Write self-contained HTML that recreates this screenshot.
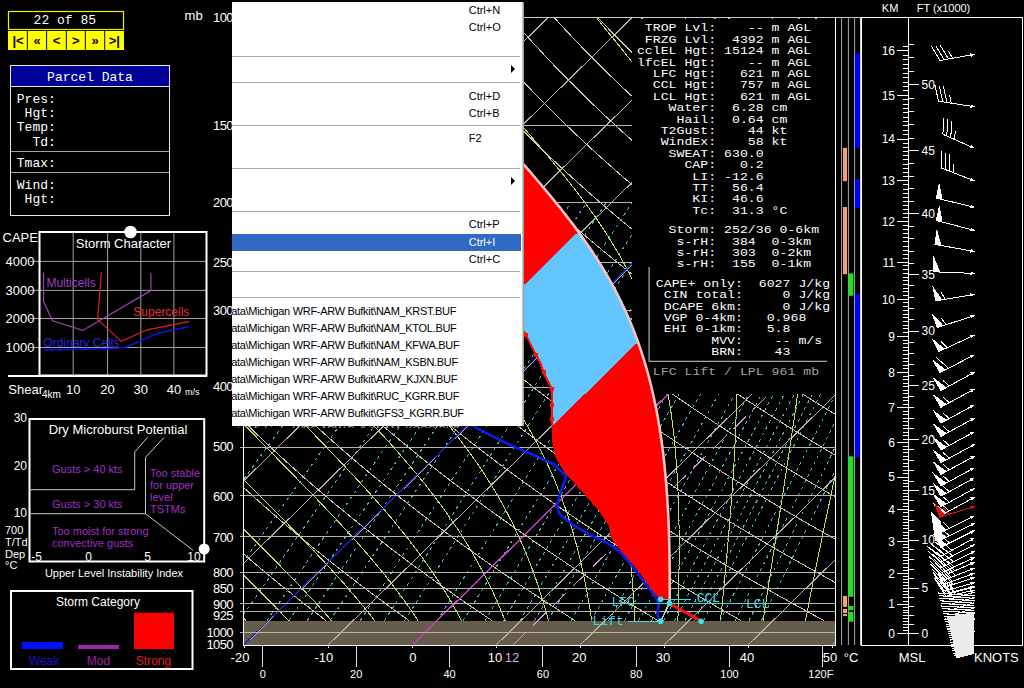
<!DOCTYPE html>
<html><head><meta charset="utf-8"><style>
html,body{margin:0;padding:0;background:#000;width:1024px;height:688px;overflow:hidden;}
body{position:relative;font-family:"Liberation Sans",sans-serif;color:#fff;}
.a{position:absolute;white-space:pre;}
.mono{font-family:"Liberation Mono",monospace;}
svg{position:absolute;left:0;top:0;}
</style></head><body>

<svg width="1024" height="688" viewBox="0 0 1024 688" shape-rendering="crispEdges">
<defs><clipPath id="plot"><rect x="243.6" y="17.5" width="592.1" height="627.5"/></clipPath></defs>
<rect x="243.6" y="620.7" width="592.1" height="24.3" fill="#665c4a"/>
<g clip-path="url(#plot)">
<path d="M-595.8,645.0 44.2,17.5 M-511.8,645.0 128.2,17.5 M-427.8,645.0 212.2,17.5 M-343.8,645.0 296.2,17.5 M-259.8,645.0 380.2,17.5 M-175.8,645.0 464.2,17.5 M-91.8,645.0 548.2,17.5 M-7.8,645.0 632.2,17.5 M76.2,645.0 716.2,17.5 M160.2,645.0 800.2,17.5 M244.2,645.0 884.2,17.5 M328.2,645.0 968.2,17.5 M412.2,645.0 1052.2,17.5 M496.2,645.0 1136.2,17.5 M580.2,645.0 1220.2,17.5 M664.2,645.0 1304.2,17.5 M748.2,645.0 1388.2,17.5 M832.2,645.0 1472.2,17.5" stroke="#b8b0a8" stroke-width="1" fill="none"/>
<path d="M-228.5,17.5 -227.9,25.5 -227.3,33.5 -226.6,41.5 -225.8,49.5 -224.9,57.5 -224.0,65.5 -222.9,73.5 -221.8,81.5 -220.6,89.5 -219.4,97.5 -218.0,105.5 -216.6,113.5 -215.1,121.5 -213.5,129.5 -211.8,137.5 -210.0,145.5 -208.2,153.5 -206.2,161.5 -204.2,169.5 -202.1,177.5 -199.9,185.5 -197.6,193.5 -195.2,201.5 -192.8,209.5 -190.2,217.5 -187.6,225.5 -184.8,233.5 -182.0,241.5 -179.0,249.5 -176.0,257.5 -172.9,265.5 -169.7,273.5 -166.3,281.5 -162.9,289.5 -159.4,297.5 -155.8,305.5 -152.0,313.5 -148.2,321.5 -144.3,329.5 -140.3,337.5 -136.1,345.5 -131.9,353.5 -127.5,361.5 -123.1,369.5 -118.5,377.5 -113.8,385.5 -109.0,393.5 -104.1,401.5 -99.1,409.5 -94.0,417.5 -88.8,425.5 -83.4,433.5 -78.0,441.5 -72.4,449.5 -66.7,457.5 -60.8,465.5 -54.9,473.5 -48.8,481.5 -42.6,489.5 -36.3,497.5 -29.9,505.5 -23.3,513.5 -16.6,521.5 -9.8,529.5 -2.9,537.5 4.2,545.5 11.4,553.5 18.8,561.5 26.2,569.5 33.8,577.5 41.6,585.5 49.5,593.5 57.5,601.5 65.6,609.5 73.9,617.5 77.3,620.7 M-185.0,17.5 -184.1,25.5 -183.1,33.5 -182.0,41.5 -180.8,49.5 -179.5,57.5 -178.2,65.5 -176.8,73.5 -175.3,81.5 -173.7,89.5 -172.0,97.5 -170.2,105.5 -168.4,113.5 -166.5,121.5 -164.5,129.5 -162.4,137.5 -160.2,145.5 -157.9,153.5 -155.5,161.5 -153.0,169.5 -150.5,177.5 -147.9,185.5 -145.1,193.5 -142.3,201.5 -139.4,209.5 -136.3,217.5 -133.2,225.5 -130.0,233.5 -126.7,241.5 -123.3,249.5 -119.8,257.5 -116.2,265.5 -112.5,273.5 -108.6,281.5 -104.7,289.5 -100.7,297.5 -96.6,305.5 -92.3,313.5 -88.0,321.5 -83.6,329.5 -79.0,337.5 -74.3,345.5 -69.6,353.5 -64.7,361.5 -59.7,369.5 -54.6,377.5 -49.3,385.5 -44.0,393.5 -38.5,401.5 -33.0,409.5 -27.3,417.5 -21.5,425.5 -15.5,433.5 -9.5,441.5 -3.3,449.5 3.0,457.5 9.4,465.5 16.0,473.5 22.7,481.5 29.5,489.5 36.4,497.5 43.5,505.5 50.7,513.5 58.0,521.5 65.4,529.5 73.0,537.5 80.8,545.5 88.6,553.5 96.6,561.5 104.8,569.5 113.1,577.5 121.5,585.5 130.1,593.5 138.8,601.5 147.6,609.5 156.6,617.5 160.3,620.7 M-141.5,17.5 -140.2,25.5 -138.8,33.5 -137.3,41.5 -135.8,49.5 -134.1,57.5 -132.4,65.5 -130.6,73.5 -128.7,81.5 -126.7,89.5 -124.6,97.5 -122.5,105.5 -120.2,113.5 -117.9,121.5 -115.4,129.5 -112.9,137.5 -110.3,145.5 -107.6,153.5 -104.8,161.5 -101.9,169.5 -98.9,177.5 -95.8,185.5 -92.6,193.5 -89.3,201.5 -85.9,209.5 -82.5,217.5 -78.9,225.5 -75.2,233.5 -71.4,241.5 -67.5,249.5 -63.5,257.5 -59.4,265.5 -55.2,273.5 -50.9,281.5 -46.5,289.5 -42.0,297.5 -37.4,305.5 -32.6,313.5 -27.8,321.5 -22.8,329.5 -17.7,337.5 -12.5,345.5 -7.2,353.5 -1.8,361.5 3.7,369.5 9.4,377.5 15.2,385.5 21.1,393.5 27.1,401.5 33.2,409.5 39.5,417.5 45.9,425.5 52.4,433.5 59.0,441.5 65.8,449.5 72.7,457.5 79.7,465.5 86.9,473.5 94.1,481.5 101.6,489.5 109.1,497.5 116.8,505.5 124.6,513.5 132.6,521.5 140.7,529.5 148.9,537.5 157.3,545.5 165.8,553.5 174.5,561.5 183.3,569.5 192.3,577.5 201.4,585.5 210.7,593.5 220.1,601.5 229.6,609.5 239.3,617.5 243.3,620.7 M-98.1,17.5 -96.4,25.5 -94.6,33.5 -92.7,41.5 -90.8,49.5 -88.8,57.5 -86.6,65.5 -84.4,73.5 -82.1,81.5 -79.7,89.5 -77.3,97.5 -74.7,105.5 -72.0,113.5 -69.3,121.5 -66.4,129.5 -63.5,137.5 -60.4,145.5 -57.3,153.5 -54.0,161.5 -50.7,169.5 -47.3,177.5 -43.7,185.5 -40.1,193.5 -36.4,201.5 -32.5,209.5 -28.6,217.5 -24.6,225.5 -20.4,233.5 -16.1,241.5 -11.8,249.5 -7.3,257.5 -2.7,265.5 2.0,273.5 6.8,281.5 11.7,289.5 16.7,297.5 21.8,305.5 27.1,313.5 32.4,321.5 37.9,329.5 43.5,337.5 49.2,345.5 55.1,353.5 61.0,361.5 67.1,369.5 73.3,377.5 79.7,385.5 86.1,393.5 92.7,401.5 99.4,409.5 106.2,417.5 113.2,425.5 120.3,433.5 127.5,441.5 134.9,449.5 142.3,457.5 150.0,465.5 157.7,473.5 165.6,481.5 173.7,489.5 181.8,497.5 190.2,505.5 198.6,513.5 207.2,521.5 216.0,529.5 224.8,537.5 233.9,545.5 243.1,553.5 252.4,561.5 261.9,569.5 271.5,577.5 281.3,585.5 291.3,593.5 301.4,601.5 311.6,609.5 322.0,617.5 326.2,620.7 M-54.6,17.5 -52.5,25.5 -50.4,33.5 -48.1,41.5 -45.8,49.5 -43.4,57.5 -40.9,65.5 -38.3,73.5 -35.6,81.5 -32.8,89.5 -29.9,97.5 -26.9,105.5 -23.8,113.5 -20.7,121.5 -17.4,129.5 -14.0,137.5 -10.5,145.5 -7.0,153.5 -3.3,161.5 0.5,169.5 4.3,177.5 8.3,185.5 12.4,193.5 16.6,201.5 20.9,209.5 25.3,217.5 29.8,225.5 34.4,233.5 39.1,241.5 44.0,249.5 48.9,257.5 54.0,265.5 59.2,273.5 64.4,281.5 69.9,289.5 75.4,297.5 81.0,305.5 86.8,313.5 92.7,321.5 98.7,329.5 104.8,337.5 111.0,345.5 117.4,353.5 123.9,361.5 130.5,369.5 137.3,377.5 144.2,385.5 151.2,393.5 158.3,401.5 165.6,409.5 173.0,417.5 180.5,425.5 188.2,433.5 196.0,441.5 203.9,449.5 212.0,457.5 220.2,465.5 228.6,473.5 237.1,481.5 245.8,489.5 254.6,497.5 263.5,505.5 272.6,513.5 281.8,521.5 291.2,529.5 300.8,537.5 310.4,545.5 320.3,553.5 330.3,561.5 340.4,569.5 350.8,577.5 361.2,585.5 371.9,593.5 382.7,601.5 393.6,609.5 404.7,617.5 409.2,620.7 M-11.1,17.5 -8.7,25.5 -6.1,33.5 -3.5,41.5 -0.8,49.5 2.0,57.5 4.9,65.5 7.9,73.5 11.0,81.5 14.2,89.5 17.5,97.5 20.9,105.5 24.4,113.5 28.0,121.5 31.6,129.5 35.4,137.5 39.3,145.5 43.3,153.5 47.4,161.5 51.6,169.5 55.9,177.5 60.4,185.5 64.9,193.5 69.5,201.5 74.3,209.5 79.1,217.5 84.1,225.5 89.2,233.5 94.4,241.5 99.7,249.5 105.1,257.5 110.7,265.5 116.4,273.5 122.1,281.5 128.0,289.5 134.1,297.5 140.2,305.5 146.5,313.5 152.9,321.5 159.4,329.5 166.1,337.5 172.8,345.5 179.7,353.5 186.8,361.5 193.9,369.5 201.2,377.5 208.7,385.5 216.2,393.5 223.9,401.5 231.7,409.5 239.7,417.5 247.8,425.5 256.1,433.5 264.5,441.5 273.0,449.5 281.7,457.5 290.5,465.5 299.5,473.5 308.6,481.5 317.9,489.5 327.3,497.5 336.8,505.5 346.6,513.5 356.4,521.5 366.5,529.5 376.7,537.5 387.0,545.5 397.5,553.5 408.2,561.5 419.0,569.5 430.0,577.5 441.1,585.5 452.5,593.5 463.9,601.5 475.6,609.5 487.4,617.5 492.2,620.7 M32.4,17.5 35.2,25.5 38.1,33.5 41.1,41.5 44.2,49.5 47.4,57.5 50.7,65.5 54.1,73.5 57.6,81.5 61.2,89.5 64.9,97.5 68.7,105.5 72.6,113.5 76.6,121.5 80.7,129.5 84.9,137.5 89.2,145.5 93.6,153.5 98.2,161.5 102.8,169.5 107.6,177.5 112.4,185.5 117.4,193.5 122.5,201.5 127.7,209.5 133.0,217.5 138.5,225.5 144.0,233.5 149.7,241.5 155.5,249.5 161.4,257.5 167.4,265.5 173.6,273.5 179.8,281.5 186.2,289.5 192.8,297.5 199.4,305.5 206.2,313.5 213.1,321.5 220.1,329.5 227.3,337.5 234.6,345.5 242.1,353.5 249.6,361.5 257.3,369.5 265.2,377.5 273.1,385.5 281.3,393.5 289.5,401.5 297.9,409.5 306.5,417.5 315.2,425.5 324.0,433.5 333.0,441.5 342.1,449.5 351.4,457.5 360.8,465.5 370.4,473.5 380.1,481.5 390.0,489.5 400.0,497.5 410.2,505.5 420.5,513.5 431.1,521.5 441.7,529.5 452.6,537.5 463.6,545.5 474.7,553.5 486.0,561.5 497.5,569.5 509.2,577.5 521.0,585.5 533.1,593.5 545.2,601.5 557.6,609.5 570.1,617.5 575.2,620.7 M75.9,17.5 79.0,25.5 82.3,33.5 85.7,41.5 89.2,49.5 92.8,57.5 96.5,65.5 100.3,73.5 104.1,81.5 108.1,89.5 112.2,97.5 116.4,105.5 120.7,113.5 125.2,121.5 129.7,129.5 134.3,137.5 139.1,145.5 143.9,153.5 148.9,161.5 154.0,169.5 159.2,177.5 164.5,185.5 169.9,193.5 175.4,201.5 181.1,209.5 186.9,217.5 192.8,225.5 198.8,233.5 204.9,241.5 211.2,249.5 217.6,257.5 224.1,265.5 230.8,273.5 237.5,281.5 244.4,289.5 251.5,297.5 258.6,305.5 265.9,313.5 273.3,321.5 280.9,329.5 288.6,337.5 296.4,345.5 304.4,353.5 312.5,361.5 320.7,369.5 329.1,377.5 337.6,385.5 346.3,393.5 355.1,401.5 364.1,409.5 373.2,417.5 382.5,425.5 391.9,433.5 401.4,441.5 411.2,449.5 421.0,457.5 431.0,465.5 441.2,473.5 451.6,481.5 462.1,489.5 472.7,497.5 483.5,505.5 494.5,513.5 505.7,521.5 517.0,529.5 528.5,537.5 540.1,545.5 551.9,553.5 563.9,561.5 576.1,569.5 588.4,577.5 601.0,585.5 613.7,593.5 626.5,601.5 639.6,609.5 652.8,617.5 658.2,620.7 M119.3,17.5 122.9,25.5 126.6,33.5 130.3,41.5 134.2,49.5 138.2,57.5 142.2,65.5 146.4,73.5 150.7,81.5 155.1,89.5 159.6,97.5 164.2,105.5 168.9,113.5 173.8,121.5 178.7,129.5 183.8,137.5 188.9,145.5 194.2,153.5 199.6,161.5 205.1,169.5 210.8,177.5 216.5,185.5 222.4,193.5 228.4,201.5 234.5,209.5 240.8,217.5 247.1,225.5 253.6,233.5 260.2,241.5 267.0,249.5 273.8,257.5 280.8,265.5 288.0,273.5 295.2,281.5 302.6,289.5 310.2,297.5 317.8,305.5 325.6,313.5 333.6,321.5 341.6,329.5 349.8,337.5 358.2,345.5 366.7,353.5 375.3,361.5 384.1,369.5 393.1,377.5 402.1,385.5 411.4,393.5 420.7,401.5 430.3,409.5 440.0,417.5 449.8,425.5 459.8,433.5 469.9,441.5 480.2,449.5 490.7,457.5 501.3,465.5 512.1,473.5 523.1,481.5 534.2,489.5 545.4,497.5 556.9,505.5 568.5,513.5 580.3,521.5 592.2,529.5 604.4,537.5 616.7,545.5 629.2,553.5 641.8,561.5 654.7,569.5 667.7,577.5 680.9,585.5 694.3,593.5 707.8,601.5 721.6,609.5 735.5,617.5 741.2,620.7 M162.8,17.5 166.7,25.5 170.8,33.5 174.9,41.5 179.2,49.5 183.5,57.5 188.0,65.5 192.6,73.5 197.3,81.5 202.1,89.5 207.0,97.5 212.0,105.5 217.1,113.5 222.4,121.5 227.7,129.5 233.2,137.5 238.8,145.5 244.5,153.5 250.4,161.5 256.3,169.5 262.4,177.5 268.6,185.5 274.9,193.5 281.4,201.5 287.9,209.5 294.6,217.5 301.5,225.5 308.4,233.5 315.5,241.5 322.7,249.5 330.1,257.5 337.5,265.5 345.2,273.5 352.9,281.5 360.8,289.5 368.8,297.5 377.0,305.5 385.3,313.5 393.8,321.5 402.4,329.5 411.1,337.5 420.0,345.5 429.0,353.5 438.2,361.5 447.5,369.5 457.0,377.5 466.6,385.5 476.4,393.5 486.4,401.5 496.5,409.5 506.7,417.5 517.1,425.5 527.7,433.5 538.4,441.5 549.3,449.5 560.4,457.5 571.6,465.5 583.0,473.5 594.5,481.5 606.3,489.5 618.2,497.5 630.2,505.5 642.5,513.5 654.9,521.5 667.5,529.5 680.3,537.5 693.2,545.5 706.4,553.5 719.7,561.5 733.2,569.5 746.9,577.5 760.8,585.5 774.9,593.5 789.1,601.5 803.6,609.5 818.2,617.5 824.1,620.7 M206.3,17.5 210.6,25.5 215.0,33.5 219.5,41.5 224.2,49.5 228.9,57.5 233.8,65.5 238.8,73.5 243.8,81.5 249.0,89.5 254.3,97.5 259.8,105.5 265.3,113.5 271.0,121.5 276.8,129.5 282.7,137.5 288.7,145.5 294.8,153.5 301.1,161.5 307.5,169.5 314.0,177.5 320.6,185.5 327.4,193.5 334.3,201.5 341.3,209.5 348.5,217.5 355.8,225.5 363.2,233.5 370.8,241.5 378.5,249.5 386.3,257.5 394.3,265.5 402.4,273.5 410.6,281.5 419.0,289.5 427.5,297.5 436.2,305.5 445.0,313.5 454.0,321.5 463.1,329.5 472.4,337.5 481.8,345.5 491.3,353.5 501.1,361.5 510.9,369.5 521.0,377.5 531.1,385.5 541.5,393.5 552.0,401.5 562.6,409.5 573.5,417.5 584.4,425.5 595.6,433.5 606.9,441.5 618.4,449.5 630.0,457.5 641.9,465.5 653.9,473.5 666.0,481.5 678.4,489.5 690.9,497.5 703.6,505.5 716.5,513.5 729.5,521.5 742.8,529.5 756.2,537.5 769.8,545.5 783.6,553.5 797.6,561.5 811.8,569.5 826.1,577.5 840.7,585.5 855.5,593.5 870.4,601.5 885.6,609.5 900.9,617.5 907.1,620.7 M249.8,17.5 254.5,25.5 259.3,33.5 264.2,41.5 269.2,49.5 274.3,57.5 279.6,65.5 284.9,73.5 290.4,81.5 296.0,89.5 301.7,97.5 307.5,105.5 313.5,113.5 319.6,121.5 325.8,129.5 332.1,137.5 338.5,145.5 345.1,153.5 351.8,161.5 358.7,169.5 365.6,177.5 372.7,185.5 379.9,193.5 387.3,201.5 394.7,209.5 402.4,217.5 410.1,225.5 418.0,233.5 426.0,241.5 434.2,249.5 442.5,257.5 451.0,265.5 459.6,273.5 468.3,281.5 477.2,289.5 486.2,297.5 495.4,305.5 504.7,313.5 514.2,321.5 523.8,329.5 533.6,337.5 543.6,345.5 553.7,353.5 563.9,361.5 574.3,369.5 584.9,377.5 595.6,385.5 606.5,393.5 617.6,401.5 628.8,409.5 640.2,417.5 651.8,425.5 663.5,433.5 675.4,441.5 687.5,449.5 699.7,457.5 712.1,465.5 724.7,473.5 737.5,481.5 750.5,489.5 763.6,497.5 776.9,505.5 790.4,513.5 804.1,521.5 818.0,529.5 832.1,537.5 846.4,545.5 860.8,553.5 875.5,561.5 890.3,569.5 905.4,577.5 920.6,585.5 936.1,593.5 951.7,601.5 967.6,609.5 983.6,617.5 990.1,620.7 M293.2,17.5 298.3,25.5 303.5,33.5 308.8,41.5 314.2,49.5 319.7,57.5 325.3,65.5 331.1,73.5 337.0,81.5 343.0,89.5 349.1,97.5 355.3,105.5 361.7,113.5 368.2,121.5 374.8,129.5 381.5,137.5 388.4,145.5 395.4,153.5 402.6,161.5 409.8,169.5 417.2,177.5 424.8,185.5 432.4,193.5 440.2,201.5 448.2,209.5 456.2,217.5 464.5,225.5 472.8,233.5 481.3,241.5 490.0,249.5 498.8,257.5 507.7,265.5 516.8,273.5 526.0,281.5 535.4,289.5 544.9,297.5 554.6,305.5 564.4,313.5 574.4,321.5 584.6,329.5 594.9,337.5 605.4,345.5 616.0,353.5 626.8,361.5 637.7,369.5 648.8,377.5 660.1,385.5 671.6,393.5 683.2,401.5 695.0,409.5 706.9,417.5 719.1,425.5 731.4,433.5 743.9,441.5 756.5,449.5 769.4,457.5 782.4,465.5 795.6,473.5 809.0,481.5 822.6,489.5 836.3,497.5 850.3,505.5 864.4,513.5 878.7,521.5 893.3,529.5 908.0,537.5 922.9,545.5 938.0,553.5 953.3,561.5 968.9,569.5 984.6,577.5 1000.5,585.5 1016.7,593.5 1033.0,601.5 1049.6,609.5 1066.3,617.5 1073.1,620.7 M336.7,17.5 342.2,25.5 347.7,33.5 353.4,41.5 359.2,49.5 365.1,57.5 371.1,65.5 377.3,73.5 383.5,81.5 389.9,89.5 396.5,97.5 403.1,105.5 409.9,113.5 416.8,121.5 423.8,129.5 431.0,137.5 438.3,145.5 445.7,153.5 453.3,161.5 461.0,169.5 468.8,177.5 476.8,185.5 484.9,193.5 493.2,201.5 501.6,209.5 510.1,217.5 518.8,225.5 527.6,233.5 536.6,241.5 545.7,249.5 555.0,257.5 564.4,265.5 574.0,273.5 583.7,281.5 593.6,289.5 603.6,297.5 613.8,305.5 624.2,313.5 634.7,321.5 645.3,329.5 656.2,337.5 667.2,345.5 678.3,353.5 689.6,361.5 701.1,369.5 712.8,377.5 724.6,385.5 736.6,393.5 748.8,401.5 761.2,409.5 773.7,417.5 786.4,425.5 799.3,433.5 812.4,441.5 825.6,449.5 839.0,457.5 852.7,465.5 866.5,473.5 880.5,481.5 894.7,489.5 909.0,497.5 923.6,505.5 938.4,513.5 953.4,521.5 968.5,529.5 983.9,537.5 999.5,545.5 1015.2,553.5 1031.2,561.5 1047.4,569.5 1063.8,577.5 1080.4,585.5 1097.3,593.5 1114.3,601.5 1131.6,609.5 1149.0,617.5 1156.1,620.7 M380.2,17.5 386.0,25.5 391.9,33.5 398.0,41.5 404.2,49.5 410.5,57.5 416.9,65.5 423.4,73.5 430.1,81.5 436.9,89.5 443.8,97.5 450.9,105.5 458.1,113.5 465.4,121.5 472.8,129.5 480.4,137.5 488.2,145.5 496.0,153.5 504.0,161.5 512.2,169.5 520.4,177.5 528.9,185.5 537.4,193.5 546.1,201.5 555.0,209.5 564.0,217.5 573.1,225.5 582.4,233.5 591.9,241.5 601.5,249.5 611.2,257.5 621.1,265.5 631.2,273.5 641.4,281.5 651.8,289.5 662.3,297.5 673.0,305.5 683.9,313.5 694.9,321.5 706.1,329.5 717.4,337.5 728.9,345.5 740.6,353.5 752.5,361.5 764.5,369.5 776.7,377.5 789.1,385.5 801.7,393.5 814.4,401.5 827.3,409.5 840.4,417.5 853.7,425.5 867.2,433.5 880.8,441.5 894.7,449.5 908.7,457.5 922.9,465.5 937.3,473.5 952.0,481.5 966.8,489.5 981.8,497.5 997.0,505.5 1012.4,513.5 1028.0,521.5 1043.8,529.5 1059.8,537.5 1076.0,545.5 1092.5,553.5 1109.1,561.5 1126.0,569.5 1143.0,577.5 1160.3,585.5 1177.9,593.5 1195.6,601.5 1213.5,609.5 1231.7,617.5 1239.1,620.7 M423.7,17.5 429.9,25.5 436.2,33.5 442.6,41.5 449.2,49.5 455.8,57.5 462.7,65.5 469.6,73.5 476.7,81.5 483.9,89.5 491.2,97.5 498.7,105.5 506.3,113.5 514.0,121.5 521.9,129.5 529.9,137.5 538.0,145.5 546.3,153.5 554.8,161.5 563.3,169.5 572.1,177.5 580.9,185.5 589.9,193.5 599.1,201.5 608.4,209.5 617.9,217.5 627.5,225.5 637.2,233.5 647.1,241.5 657.2,249.5 667.4,257.5 677.8,265.5 688.4,273.5 699.1,281.5 710.0,289.5 721.0,297.5 732.2,305.5 743.6,313.5 755.1,321.5 766.8,329.5 778.7,337.5 790.7,345.5 803.0,353.5 815.4,361.5 827.9,369.5 840.7,377.5 853.6,385.5 866.7,393.5 880.0,401.5 893.5,409.5 907.2,417.5 921.0,425.5 935.1,433.5 949.3,441.5 963.8,449.5 978.4,457.5 993.2,465.5 1008.2,473.5 1023.4,481.5 1038.9,489.5 1054.5,497.5 1070.3,505.5 1086.4,513.5 1102.6,521.5 1119.0,529.5 1135.7,537.5 1152.6,545.5 1169.7,553.5 1187.0,561.5 1204.5,569.5 1222.3,577.5 1240.3,585.5 1258.5,593.5 1276.9,601.5 1295.5,609.5 1314.4,617.5 1322.0,620.7 M467.2,17.5 473.7,25.5 480.4,33.5 487.2,41.5 494.2,49.5 501.2,57.5 508.4,65.5 515.8,73.5 523.2,81.5 530.8,89.5 538.6,97.5 546.4,105.5 554.5,113.5 562.6,121.5 570.9,129.5 579.3,137.5 587.9,145.5 596.6,153.5 605.5,161.5 614.5,169.5 623.7,177.5 633.0,185.5 642.4,193.5 652.0,201.5 661.8,209.5 671.7,217.5 681.8,225.5 692.0,233.5 702.4,241.5 713.0,249.5 723.7,257.5 734.5,265.5 745.6,273.5 756.8,281.5 768.2,289.5 779.7,297.5 791.4,305.5 803.3,313.5 815.3,321.5 827.5,329.5 839.9,337.5 852.5,345.5 865.3,353.5 878.2,361.5 891.3,369.5 904.6,377.5 918.1,385.5 931.8,393.5 945.6,401.5 959.7,409.5 973.9,417.5 988.4,425.5 1003.0,433.5 1017.8,441.5 1032.8,449.5 1048.1,457.5 1063.5,465.5 1079.1,473.5 1094.9,481.5 1111.0,489.5 1127.2,497.5 1143.7,505.5 1160.3,513.5 1177.2,521.5 1194.3,529.5 1211.6,537.5 1229.1,545.5 1246.9,553.5 1264.9,561.5 1283.1,569.5 1301.5,577.5 1320.2,585.5 1339.1,593.5 1358.2,601.5 1377.5,609.5 1397.1,617.5 1405.0,620.7 M510.6,17.5 517.6,25.5 524.6,33.5 531.8,41.5 539.2,49.5 546.6,57.5 554.2,65.5 561.9,73.5 569.8,81.5 577.8,89.5 585.9,97.5 594.2,105.5 602.6,113.5 611.2,121.5 619.9,129.5 628.8,137.5 637.8,145.5 646.9,153.5 656.2,161.5 665.7,169.5 675.3,177.5 685.0,185.5 694.9,193.5 705.0,201.5 715.2,209.5 725.6,217.5 736.1,225.5 746.8,233.5 757.7,241.5 768.7,249.5 779.9,257.5 791.3,265.5 802.8,273.5 814.5,281.5 826.3,289.5 838.4,297.5 850.6,305.5 863.0,313.5 875.5,321.5 888.3,329.5 901.2,337.5 914.3,345.5 927.6,353.5 941.1,361.5 954.7,369.5 968.6,377.5 982.6,385.5 996.8,393.5 1011.3,401.5 1025.9,409.5 1040.7,417.5 1055.7,425.5 1070.9,433.5 1086.3,441.5 1101.9,449.5 1117.7,457.5 1133.7,465.5 1150.0,473.5 1166.4,481.5 1183.1,489.5 1199.9,497.5 1217.0,505.5 1234.3,513.5 1251.8,521.5 1269.6,529.5 1287.5,537.5 1305.7,545.5 1324.1,553.5 1342.8,561.5 1361.6,569.5 1380.7,577.5 1400.1,585.5 1419.7,593.5 1439.5,601.5 1459.5,609.5 1479.8,617.5 1488.0,620.7 M554.1,17.5 561.4,25.5 568.9,33.5 576.4,41.5 584.1,49.5 592.0,57.5 600.0,65.5 608.1,73.5 616.4,81.5 624.8,89.5 633.3,97.5 642.0,105.5 650.8,113.5 659.8,121.5 668.9,129.5 678.2,137.5 687.6,145.5 697.2,153.5 707.0,161.5 716.8,169.5 726.9,177.5 737.1,185.5 747.4,193.5 758.0,201.5 768.6,209.5 779.5,217.5 790.5,225.5 801.6,233.5 813.0,241.5 824.5,249.5 836.1,257.5 848.0,265.5 860.0,273.5 872.2,281.5 884.5,289.5 897.1,297.5 909.8,305.5 922.7,313.5 935.8,321.5 949.0,329.5 962.5,337.5 976.1,345.5 989.9,353.5 1003.9,361.5 1018.1,369.5 1032.5,377.5 1047.1,385.5 1061.9,393.5 1076.9,401.5 1092.0,409.5 1107.4,417.5 1123.0,425.5 1138.8,433.5 1154.8,441.5 1171.0,449.5 1187.4,457.5 1204.0,465.5 1220.8,473.5 1237.9,481.5 1255.2,489.5 1272.6,497.5 1290.4,505.5 1308.3,513.5 1326.4,521.5 1344.8,529.5 1363.4,537.5 1382.3,545.5 1401.3,553.5 1420.6,561.5 1440.2,569.5 1460.0,577.5 1480.0,585.5 1500.3,593.5 1520.8,601.5 1541.5,609.5 1562.5,617.5 1571.0,620.7 M597.6,17.5 605.3,25.5 613.1,33.5 621.1,41.5 629.1,49.5 637.4,57.5 645.7,65.5 654.3,73.5 662.9,81.5 671.7,89.5 680.7,97.5 689.8,105.5 699.0,113.5 708.4,121.5 718.0,129.5 727.7,137.5 737.5,145.5 747.5,153.5 757.7,161.5 768.0,169.5 778.5,177.5 789.1,185.5 799.9,193.5 810.9,201.5 822.0,209.5 833.3,217.5 844.8,225.5 856.4,233.5 868.2,241.5 880.2,249.5 892.4,257.5 904.7,265.5 917.2,273.5 929.9,281.5 942.7,289.5 955.8,297.5 969.0,305.5 982.4,313.5 996.0,321.5 1009.8,329.5 1023.7,337.5 1037.9,345.5 1052.2,353.5 1066.8,361.5 1081.5,369.5 1096.5,377.5 1111.6,385.5 1126.9,393.5 1142.5,401.5 1158.2,409.5 1174.2,417.5 1190.3,425.5 1206.7,433.5 1223.3,441.5 1240.1,449.5 1257.1,457.5 1274.3,465.5 1291.7,473.5 1309.4,481.5 1327.3,489.5 1345.4,497.5 1363.7,505.5 1382.3,513.5 1401.1,521.5 1420.1,529.5 1439.3,537.5 1458.8,545.5 1478.6,553.5 1498.5,561.5 1518.7,569.5 1539.2,577.5 1559.9,585.5 1580.9,593.5 1602.1,601.5 1623.5,609.5 1645.2,617.5 1654.0,620.7 M641.1,17.5 649.1,25.5 657.3,33.5 665.7,41.5 674.1,49.5 682.8,57.5 691.5,65.5 700.4,73.5 709.5,81.5 718.7,89.5 728.0,97.5 737.6,105.5 747.2,113.5 757.0,121.5 767.0,129.5 777.1,137.5 787.4,145.5 797.8,153.5 808.4,161.5 819.2,169.5 830.1,177.5 841.2,185.5 852.4,193.5 863.9,201.5 875.4,209.5 887.2,217.5 899.1,225.5 911.2,233.5 923.5,241.5 936.0,249.5 948.6,257.5 961.4,265.5 974.4,273.5 987.6,281.5 1000.9,289.5 1014.5,297.5 1028.2,305.5 1042.1,313.5 1056.2,321.5 1070.5,329.5 1085.0,337.5 1099.7,345.5 1114.6,353.5 1129.6,361.5 1144.9,369.5 1160.4,377.5 1176.1,385.5 1192.0,393.5 1208.1,401.5 1224.4,409.5 1240.9,417.5 1257.6,425.5 1274.6,433.5 1291.8,441.5 1309.1,449.5 1326.7,457.5 1344.6,465.5 1362.6,473.5 1380.9,481.5 1399.4,489.5 1418.1,497.5 1437.0,505.5 1456.2,513.5 1475.7,521.5 1495.3,529.5 1515.2,537.5 1535.4,545.5 1555.8,553.5 1576.4,561.5 1597.3,569.5 1618.4,577.5 1639.8,585.5 1661.5,593.5 1683.4,601.5 1705.5,609.5 1727.9,617.5 1737.0,620.7 M684.6,17.5 693.0,25.5 701.6,33.5 710.3,41.5 719.1,49.5 728.1,57.5 737.3,65.5 746.6,73.5 756.1,81.5 765.7,89.5 775.4,97.5 785.3,105.5 795.4,113.5 805.6,121.5 816.0,129.5 826.6,137.5 837.3,145.5 848.1,153.5 859.2,161.5 870.4,169.5 881.7,177.5 893.2,185.5 904.9,193.5 916.8,201.5 928.9,209.5 941.1,217.5 953.5,225.5 966.0,233.5 978.8,241.5 991.7,249.5 1004.8,257.5 1018.1,265.5 1031.6,273.5 1045.3,281.5 1059.1,289.5 1073.2,297.5 1087.4,305.5 1101.8,313.5 1116.4,321.5 1131.2,329.5 1146.3,337.5 1161.5,345.5 1176.9,353.5 1192.5,361.5 1208.3,369.5 1224.4,377.5 1240.6,385.5 1257.0,393.5 1273.7,401.5 1290.6,409.5 1307.7,417.5 1325.0,425.5 1342.5,433.5 1360.2,441.5 1378.2,449.5 1396.4,457.5 1414.8,465.5 1433.5,473.5 1452.4,481.5 1471.5,489.5 1490.8,497.5 1510.4,505.5 1530.2,513.5 1550.3,521.5 1570.6,529.5 1591.1,537.5 1611.9,545.5 1633.0,553.5 1654.3,561.5 1675.8,569.5 1697.7,577.5 1719.7,585.5 1742.1,593.5 1764.6,601.5 1787.5,609.5 1810.6,617.5 1819.9,620.7 M728.0,17.5 736.8,25.5 745.8,33.5 754.9,41.5 764.1,49.5 773.5,57.5 783.1,65.5 792.8,73.5 802.6,81.5 812.6,89.5 822.8,97.5 833.1,105.5 843.6,113.5 854.2,121.5 865.0,129.5 876.0,137.5 887.1,145.5 898.4,153.5 909.9,161.5 921.5,169.5 933.3,177.5 945.3,185.5 957.4,193.5 969.8,201.5 982.3,209.5 994.9,217.5 1007.8,225.5 1020.8,233.5 1034.1,241.5 1047.5,249.5 1061.1,257.5 1074.8,265.5 1088.8,273.5 1103.0,281.5 1117.3,289.5 1131.8,297.5 1146.6,305.5 1161.5,313.5 1176.7,321.5 1192.0,329.5 1207.5,337.5 1223.3,345.5 1239.2,353.5 1255.4,361.5 1271.7,369.5 1288.3,377.5 1305.1,385.5 1322.1,393.5 1339.3,401.5 1356.8,409.5 1374.4,417.5 1392.3,425.5 1410.4,433.5 1428.7,441.5 1447.3,449.5 1466.1,457.5 1485.1,465.5 1504.3,473.5 1523.8,481.5 1543.6,489.5 1563.5,497.5 1583.7,505.5 1604.2,513.5 1624.9,521.5 1645.8,529.5 1667.1,537.5 1688.5,545.5 1710.2,553.5 1732.2,561.5 1754.4,569.5 1776.9,577.5 1799.6,585.5 1822.7,593.5 1845.9,601.5 1869.5,609.5 1893.3,617.5 1902.9,620.7 M771.5,17.5 780.7,25.5 790.0,33.5 799.5,41.5 809.1,49.5 818.9,57.5 828.8,65.5 838.9,73.5 849.2,81.5 859.6,89.5 870.2,97.5 880.9,105.5 891.8,113.5 902.8,121.5 914.1,129.5 925.4,137.5 937.0,145.5 948.7,153.5 960.6,161.5 972.7,169.5 984.9,177.5 997.4,185.5 1010.0,193.5 1022.7,201.5 1035.7,209.5 1048.8,217.5 1062.1,225.5 1075.6,233.5 1089.3,241.5 1103.2,249.5 1117.3,257.5 1131.5,265.5 1146.0,273.5 1160.7,281.5 1175.5,289.5 1190.5,297.5 1205.8,305.5 1221.2,313.5 1236.9,321.5 1252.7,329.5 1268.8,337.5 1285.1,345.5 1301.5,353.5 1318.2,361.5 1335.1,369.5 1352.3,377.5 1369.6,385.5 1387.1,393.5 1404.9,401.5 1422.9,409.5 1441.2,417.5 1459.6,425.5 1478.3,433.5 1497.2,441.5 1516.4,449.5 1535.7,457.5 1555.4,465.5 1575.2,473.5 1595.3,481.5 1615.7,489.5 1636.3,497.5 1657.1,505.5 1678.2,513.5 1699.5,521.5 1721.1,529.5 1743.0,537.5 1765.1,545.5 1787.4,553.5 1810.1,561.5 1833.0,569.5 1856.1,577.5 1879.6,585.5 1903.3,593.5 1927.2,601.5 1951.5,609.5 1976.0,617.5 1985.9,620.7 M815.0,17.5 824.5,25.5 834.3,33.5 844.1,41.5 854.1,49.5 864.3,57.5 874.6,65.5 885.1,73.5 895.8,81.5 906.6,89.5 917.5,97.5 928.7,105.5 940.0,113.5 951.4,121.5 963.1,129.5 974.9,137.5 986.9,145.5 999.0,153.5 1011.4,161.5 1023.9,169.5 1036.5,177.5 1049.4,185.5 1062.5,193.5 1075.7,201.5 1089.1,209.5 1102.7,217.5 1116.5,225.5 1130.4,233.5 1144.6,241.5 1159.0,249.5 1173.5,257.5 1188.3,265.5 1203.2,273.5 1218.3,281.5 1233.7,289.5 1249.2,297.5 1265.0,305.5 1280.9,313.5 1297.1,321.5 1313.5,329.5 1330.1,337.5 1346.8,345.5 1363.9,353.5 1381.1,361.5 1398.5,369.5 1416.2,377.5 1434.1,385.5 1452.2,393.5 1470.5,401.5 1489.1,409.5 1507.9,417.5 1526.9,425.5 1546.2,433.5 1565.7,441.5 1585.4,449.5 1605.4,457.5 1625.6,465.5 1646.1,473.5 1666.8,481.5 1687.8,489.5 1709.0,497.5 1730.4,505.5 1752.2,513.5 1774.1,521.5 1796.4,529.5 1818.9,537.5 1841.6,545.5 1864.6,553.5 1887.9,561.5 1911.5,569.5 1935.3,577.5 1959.5,585.5 1983.9,593.5 2008.5,601.5 2033.5,609.5 2058.7,617.5 2068.9,620.7 M858.5,17.5 868.4,25.5 878.5,33.5 888.7,41.5 899.1,49.5 909.7,57.5 920.4,65.5 931.3,73.5 942.3,81.5 953.5,89.5 964.9,97.5 976.4,105.5 988.2,113.5 1000.0,121.5 1012.1,129.5 1024.3,137.5 1036.7,145.5 1049.3,153.5 1062.1,161.5 1075.0,169.5 1088.2,177.5 1101.5,185.5 1115.0,193.5 1128.6,201.5 1142.5,209.5 1156.6,217.5 1170.8,225.5 1185.3,233.5 1199.9,241.5 1214.7,249.5 1229.7,257.5 1245.0,265.5 1260.4,273.5 1276.0,281.5 1291.9,289.5 1307.9,297.5 1324.2,305.5 1340.6,313.5 1357.3,321.5 1374.2,329.5 1391.3,337.5 1408.6,345.5 1426.2,353.5 1443.9,361.5 1461.9,369.5 1480.1,377.5 1498.6,385.5 1517.3,393.5 1536.2,401.5 1555.3,409.5 1574.6,417.5 1594.3,425.5 1614.1,433.5 1634.2,441.5 1654.5,449.5 1675.1,457.5 1695.9,465.5 1717.0,473.5 1738.3,481.5 1759.9,489.5 1781.7,497.5 1803.8,505.5 1826.1,513.5 1848.7,521.5 1871.6,529.5 1894.8,537.5 1918.2,545.5 1941.9,553.5 1965.8,561.5 1990.1,569.5 2014.6,577.5 2039.4,585.5 2064.5,593.5 2089.8,601.5 2115.5,609.5 2141.4,617.5 2151.9,620.7" stroke="#ccc8a8" stroke-width="1" fill="none"/>
<path d="M161.6,620.7 159.3,618.5 156.3,615.6 153.4,612.8 150.4,609.9 147.4,607.0 144.4,604.0 141.3,601.1 138.2,598.0 135.1,595.0 132.0,591.9 128.8,588.8 125.6,585.6 122.4,582.4 119.1,579.2 115.9,575.9 112.6,572.6 109.2,569.3 105.9,565.9 102.5,562.4 99.1,558.9 95.7,555.4 92.2,551.8 88.7,548.2 85.2,544.5 81.7,540.8 78.1,537.0 74.5,533.2 70.9,529.3 67.3,525.3 63.6,521.3 59.9,517.2 56.2,513.1 52.5,508.9 48.7,504.6 44.9,500.3 41.0,495.9 37.2,491.4 33.3,486.8 29.4,482.2 25.4,477.5 21.5,472.7 17.5,467.8 13.4,462.8 9.4,457.7 5.3,452.5 1.2,447.2 -2.9,441.8 -7.1,436.3 -11.3,430.7 -15.6,425.0 -19.8,419.1 -24.1,413.1 -28.4,407.0 -32.8,400.7 -37.2,394.3 -41.6,387.7 -46.0,381.0 -50.5,374.0 -55.0,366.9 -59.5,359.6 -64.1,352.1 -68.7,344.4 -73.3,336.4 -78.0,328.2 -82.7,319.8 -87.4,311.0 M203.7,620.7 201.4,618.5 198.5,615.6 195.5,612.8 192.6,609.9 189.6,607.0 186.5,604.0 183.4,601.1 180.3,598.0 177.2,595.0 174.0,591.9 170.8,588.8 167.6,585.6 164.3,582.4 161.0,579.2 157.7,575.9 154.3,572.6 150.9,569.3 147.5,565.9 144.0,562.4 140.6,558.9 137.0,555.4 133.5,551.8 129.9,548.2 126.3,544.5 122.6,540.8 119.0,537.0 115.3,533.2 111.5,529.3 107.7,525.3 103.9,521.3 100.1,517.2 96.2,513.1 92.3,508.9 88.4,504.6 84.5,500.3 80.5,495.9 76.4,491.4 72.4,486.8 68.3,482.2 64.2,477.5 60.0,472.7 55.8,467.8 51.6,462.8 47.4,457.7 43.1,452.5 38.8,447.2 34.4,441.8 30.0,436.3 25.6,430.7 21.2,425.0 16.7,419.1 12.2,413.1 7.6,407.0 3.0,400.7 -1.6,394.3 -6.3,387.7 -11.0,381.0 -15.7,374.0 -20.5,366.9 -25.3,359.6 -30.1,352.1 -35.0,344.4 -39.9,336.4 -44.8,328.2 -49.8,319.8 -54.8,311.0 -59.9,302.0 -64.9,292.6 M246.1,620.7 243.8,618.5 241.0,615.6 238.1,612.8 235.2,609.9 232.2,607.0 229.2,604.0 226.2,601.1 223.1,598.0 220.0,595.0 216.8,591.9 213.6,588.8 210.4,585.6 207.1,582.4 203.8,579.2 200.5,575.9 197.1,572.6 193.7,569.3 190.2,565.9 186.7,562.4 183.2,558.9 179.6,555.4 176.0,551.8 172.3,548.2 168.6,544.5 164.9,540.8 161.2,537.0 157.3,533.2 153.5,529.3 149.6,525.3 145.7,521.3 141.8,517.2 137.8,513.1 133.7,508.9 129.7,504.6 125.6,500.3 121.4,495.9 117.2,491.4 113.0,486.8 108.8,482.2 104.5,477.5 100.1,472.7 95.8,467.8 91.4,462.8 86.9,457.7 82.4,452.5 77.9,447.2 73.4,441.8 68.8,436.3 64.1,430.7 59.5,425.0 54.8,419.1 50.0,413.1 45.2,407.0 40.4,400.7 35.5,394.3 30.6,387.7 25.6,381.0 20.6,374.0 15.6,366.9 10.5,359.6 5.4,352.1 0.2,344.4 -5.0,336.4 -10.2,328.2 -15.5,319.8 -20.9,311.0 -26.2,302.0 -31.6,292.6 -37.1,282.9 -42.6,272.9 M288.7,620.7 286.6,618.5 283.8,615.6 281.1,612.8 278.3,609.9 275.4,607.0 272.6,604.0 269.6,601.1 266.6,598.0 263.6,595.0 260.5,591.9 257.4,588.8 254.3,585.6 251.1,582.4 247.8,579.2 244.5,575.9 241.2,572.6 237.8,569.3 234.3,565.9 230.9,562.4 227.3,558.9 223.7,555.4 220.1,551.8 216.4,548.2 212.7,544.5 209.0,540.8 205.1,537.0 201.3,533.2 197.4,529.3 193.4,525.3 189.4,521.3 185.4,517.2 181.3,513.1 177.2,508.9 173.0,504.6 168.8,500.3 164.5,495.9 160.2,491.4 155.8,486.8 151.4,482.2 146.9,477.5 142.5,472.7 137.9,467.8 133.3,462.8 128.7,457.7 124.0,452.5 119.3,447.2 114.5,441.8 109.7,436.3 104.9,430.7 100.0,425.0 95.0,419.1 90.0,413.1 85.0,407.0 79.9,400.7 74.8,394.3 69.6,387.7 64.4,381.0 59.1,374.0 53.8,366.9 48.4,359.6 43.0,352.1 37.5,344.4 32.0,336.4 26.4,328.2 20.8,319.8 15.1,311.0 9.4,302.0 3.7,292.6 -2.2,282.9 -8.0,272.9 -13.9,262.4 -19.9,251.5 M331.6,620.7 329.6,618.5 327.1,615.6 324.6,612.8 322.0,609.9 319.3,607.0 316.6,604.0 313.9,601.1 311.1,598.0 308.2,595.0 305.3,591.9 302.4,588.8 299.4,585.6 296.3,582.4 293.2,579.2 290.0,575.9 286.8,572.6 283.5,569.3 280.2,565.9 276.8,562.4 273.3,558.9 269.8,555.4 266.3,551.8 262.6,548.2 259.0,544.5 255.2,540.8 251.4,537.0 247.6,533.2 243.7,529.3 239.7,525.3 235.7,521.3 231.6,517.2 227.5,513.1 223.3,508.9 219.0,504.6 214.7,500.3 210.4,495.9 206.0,491.4 201.5,486.8 197.0,482.2 192.4,477.5 187.7,472.7 183.1,467.8 178.3,462.8 173.5,457.7 168.6,452.5 163.7,447.2 158.8,441.8 153.8,436.3 148.7,430.7 143.6,425.0 138.4,419.1 133.1,413.1 127.8,407.0 122.5,400.7 117.1,394.3 111.6,387.7 106.1,381.0 100.6,374.0 94.9,366.9 89.3,359.6 83.5,352.1 77.7,344.4 71.9,336.4 66.0,328.2 60.0,319.8 54.0,311.0 47.9,302.0 41.7,292.6 35.5,282.9 29.3,272.9 23.0,262.4 16.6,251.5 10.2,240.2 3.7,228.3 M374.8,620.7 373.0,618.5 370.8,615.6 368.5,612.8 366.2,609.9 363.8,607.0 361.4,604.0 358.9,601.1 356.4,598.0 353.8,595.0 351.1,591.9 348.4,588.8 345.7,585.6 342.9,582.4 340.0,579.2 337.0,575.9 334.0,572.6 331.0,569.3 327.8,565.9 324.7,562.4 321.4,558.9 318.1,555.4 314.7,551.8 311.2,548.2 307.7,544.5 304.1,540.8 300.4,537.0 296.7,533.2 292.9,529.3 289.0,525.3 285.1,521.3 281.1,517.2 277.0,513.1 272.8,508.9 268.6,504.6 264.3,500.3 259.9,495.9 255.5,491.4 250.9,486.8 246.4,482.2 241.7,477.5 237.0,472.7 232.2,467.8 227.3,462.8 222.4,457.7 217.4,452.5 212.3,447.2 207.2,441.8 202.0,436.3 196.7,430.7 191.3,425.0 185.9,419.1 180.5,413.1 174.9,407.0 169.3,400.7 163.6,394.3 157.9,387.7 152.1,381.0 146.2,374.0 140.3,366.9 134.3,359.6 128.2,352.1 122.1,344.4 115.8,336.4 109.6,328.2 103.2,319.8 96.8,311.0 90.3,302.0 83.7,292.6 77.1,282.9 70.4,272.9 63.6,262.4 56.8,251.5 49.9,240.2 42.9,228.3 35.9,215.9 28.8,202.9 M418.1,620.7 416.6,618.5 414.8,615.6 412.8,612.8 410.8,609.9 408.8,607.0 406.7,604.0 404.6,601.1 402.4,598.0 400.2,595.0 397.9,591.9 395.5,588.8 393.1,585.6 390.6,582.4 388.1,579.2 385.5,575.9 382.8,572.6 380.1,569.3 377.3,565.9 374.4,562.4 371.5,558.9 368.5,555.4 365.4,551.8 362.3,548.2 359.0,544.5 355.7,540.8 352.3,537.0 348.8,533.2 345.3,529.3 341.6,525.3 337.9,521.3 334.1,517.2 330.2,513.1 326.2,508.9 322.1,504.6 318.0,500.3 313.7,495.9 309.4,491.4 304.9,486.8 300.4,482.2 295.8,477.5 291.1,472.7 286.3,467.8 281.4,462.8 276.4,457.7 271.4,452.5 266.2,447.2 261.0,441.8 255.6,436.3 250.2,430.7 244.7,425.0 239.1,419.1 233.4,413.1 227.7,407.0 221.8,400.7 215.9,394.3 209.9,387.7 203.8,381.0 197.6,374.0 191.3,366.9 185.0,359.6 178.5,352.1 172.0,344.4 165.4,336.4 158.7,328.2 152.0,319.8 145.1,311.0 138.2,302.0 131.2,292.6 124.0,282.9 116.9,272.9 109.6,262.4 102.2,251.5 94.8,240.2 87.2,228.3 79.6,215.9 71.9,202.9 64.1,189.3 56.2,174.9 M461.6,620.7 460.4,618.5 458.9,615.6 457.3,612.8 455.7,609.9 454.1,607.0 452.4,604.0 450.7,601.1 448.9,598.0 447.1,595.0 445.2,591.9 443.3,588.8 441.3,585.6 439.3,582.4 437.2,579.2 435.0,575.9 432.8,572.6 430.5,569.3 428.1,565.9 425.7,562.4 423.2,558.9 420.7,555.4 418.1,551.8 415.3,548.2 412.5,544.5 409.7,540.8 406.7,537.0 403.7,533.2 400.5,529.3 397.3,525.3 394.0,521.3 390.6,517.2 387.1,513.1 383.5,508.9 379.7,504.6 375.9,500.3 372.0,495.9 368.0,491.4 363.8,486.8 359.6,482.2 355.2,477.5 350.7,472.7 346.1,467.8 341.4,462.8 336.5,457.7 331.6,452.5 326.5,447.2 321.3,441.8 316.0,436.3 310.6,430.7 305.0,425.0 299.4,419.1 293.6,413.1 287.7,407.0 281.7,400.7 275.6,394.3 269.3,387.7 263.0,381.0 256.5,374.0 249.9,366.9 243.3,359.6 236.5,352.1 229.6,344.4 222.6,336.4 215.5,328.2 208.3,319.8 200.9,311.0 193.5,302.0 186.0,292.6 178.3,282.9 170.6,272.9 162.7,262.4 154.8,251.5 146.7,240.2 138.5,228.3 130.2,215.9 121.8,202.9 113.3,189.3 104.7,174.9 96.0,159.6 87.2,143.5 M505.1,620.7 504.2,618.5 503.1,615.6 501.9,612.8 500.7,609.9 499.5,607.0 498.2,604.0 496.9,601.1 495.6,598.0 494.2,595.0 492.8,591.9 491.3,588.8 489.8,585.6 488.2,582.4 486.6,579.2 484.9,575.9 483.2,572.6 481.5,569.3 479.7,565.9 477.8,562.4 475.8,558.9 473.8,555.4 471.8,551.8 469.6,548.2 467.4,544.5 465.1,540.8 462.7,537.0 460.3,533.2 457.8,529.3 455.1,525.3 452.4,521.3 449.6,517.2 446.7,513.1 443.7,508.9 440.6,504.6 437.3,500.3 434.0,495.9 430.5,491.4 427.0,486.8 423.3,482.2 419.4,477.5 415.5,472.7 411.4,467.8 407.1,462.8 402.7,457.7 398.2,452.5 393.5,447.2 388.7,441.8 383.7,436.3 378.5,430.7 373.2,425.0 367.8,419.1 362.1,413.1 356.4,407.0 350.4,400.7 344.3,394.3 338.0,387.7 331.6,381.0 325.0,374.0 318.3,366.9 311.4,359.6 304.3,352.1 297.1,344.4 289.8,336.4 282.3,328.2 274.6,319.8 266.8,311.0 258.9,302.0 250.8,292.6 242.6,282.9 234.2,272.9 225.7,262.4 217.1,251.5 208.3,240.2 199.4,228.3 190.3,215.9 181.1,202.9 171.7,189.3 162.2,174.9 152.6,159.6 142.8,143.5 132.9,126.3 122.9,107.9 M548.5,620.7 547.9,618.5 547.1,615.6 546.4,612.8 545.5,609.9 544.7,607.0 543.8,604.0 542.9,601.1 542.0,598.0 541.1,595.0 540.1,591.9 539.1,588.8 538.1,585.6 537.0,582.4 535.9,579.2 534.7,575.9 533.5,572.6 532.3,569.3 531.0,565.9 529.7,562.4 528.3,558.9 526.9,555.4 525.5,551.8 523.9,548.2 522.3,544.5 520.7,540.8 519.0,537.0 517.2,533.2 515.4,529.3 513.5,525.3 511.5,521.3 509.4,517.2 507.3,513.1 505.1,508.9 502.7,504.6 500.3,500.3 497.8,495.9 495.1,491.4 492.4,486.8 489.5,482.2 486.5,477.5 483.4,472.7 480.2,467.8 476.8,462.8 473.2,457.7 469.5,452.5 465.6,447.2 461.6,441.8 457.4,436.3 453.0,430.7 448.4,425.0 443.6,419.1 438.7,413.1 433.5,407.0 428.1,400.7 422.5,394.3 416.6,387.7 410.6,381.0 404.3,374.0 397.8,366.9 391.0,359.6 384.0,352.1 376.8,344.4 369.4,336.4 361.7,328.2 353.8,319.8 345.7,311.0 337.4,302.0 328.8,292.6 320.1,282.9 311.1,272.9 301.9,262.4 292.6,251.5 283.0,240.2 273.2,228.3 263.3,215.9 253.1,202.9 242.8,189.3 232.2,174.9 221.5,159.6 210.6,143.5 199.5,126.3 188.1,107.9 176.6,88.2 165.0,66.9 M591.8,620.7 591.4,618.5 591.0,615.6 590.6,612.8 590.1,609.9 589.6,607.0 589.1,604.0 588.6,601.1 588.1,598.0 587.5,595.0 587.0,591.9 586.4,588.8 585.8,585.6 585.1,582.4 584.5,579.2 583.8,575.9 583.1,572.6 582.4,569.3 581.6,565.9 580.8,562.4 580.0,558.9 579.1,555.4 578.2,551.8 577.3,548.2 576.3,544.5 575.3,540.8 574.3,537.0 573.2,533.2 572.0,529.3 570.8,525.3 569.6,521.3 568.3,517.2 566.9,513.1 565.5,508.9 564.0,504.6 562.5,500.3 560.8,495.9 559.1,491.4 557.3,486.8 555.4,482.2 553.4,477.5 551.3,472.7 549.1,467.8 546.8,462.8 544.4,457.7 541.8,452.5 539.1,447.2 536.3,441.8 533.3,436.3 530.1,430.7 526.8,425.0 523.2,419.1 519.5,413.1 515.6,407.0 511.4,400.7 507.0,394.3 502.3,387.7 497.4,381.0 492.2,374.0 486.7,366.9 481.0,359.6 474.9,352.1 468.4,344.4 461.7,336.4 454.6,328.2 447.2,319.8 439.4,311.0 431.2,302.0 422.7,292.6 413.9,282.9 404.7,272.9 395.1,262.4 385.2,251.5 375.0,240.2 364.5,228.3 353.7,215.9 342.5,202.9 331.1,189.3 319.3,174.9 307.3,159.6 295.0,143.5 282.4,126.3 269.5,107.9 256.3,88.2 242.9,66.9 229.2,43.7 215.3,18.4 M634.9,620.7 634.8,618.5 634.6,615.6 634.5,612.8 634.3,609.9 634.1,607.0 633.9,604.0 633.8,601.1 633.6,598.0 633.4,595.0 633.1,591.9 632.9,588.8 632.7,585.6 632.4,582.4 632.2,579.2 631.9,575.9 631.6,572.6 631.3,569.3 631.0,565.9 630.6,562.4 630.3,558.9 629.9,555.4 629.5,551.8 629.1,548.2 628.7,544.5 628.2,540.8 627.7,537.0 627.2,533.2 626.7,529.3 626.1,525.3 625.5,521.3 624.9,517.2 624.2,513.1 623.5,508.9 622.8,504.6 622.0,500.3 621.2,495.9 620.3,491.4 619.4,486.8 618.4,482.2 617.4,477.5 616.3,472.7 615.2,467.8 613.9,462.8 612.6,457.7 611.2,452.5 609.7,447.2 608.2,441.8 606.5,436.3 604.7,430.7 602.8,425.0 600.7,419.1 598.5,413.1 596.2,407.0 593.6,400.7 590.9,394.3 588.1,387.7 584.9,381.0 581.6,374.0 578.0,366.9 574.1,359.6 570.0,352.1 565.5,344.4 560.6,336.4 555.4,328.2 549.8,319.8 543.7,311.0 537.2,302.0 530.2,292.6 522.7,282.9 514.6,272.9 506.0,262.4 496.7,251.5 486.9,240.2 476.5,228.3 465.5,215.9 454.0,202.9 441.8,189.3 429.1,174.9 415.9,159.6 402.2,143.5 387.9,126.3 373.2,107.9 358.1,88.2 342.4,66.9 326.4,43.7 309.9,18.4 M677.8,620.7 677.9,618.5 678.0,615.6 678.0,612.8 678.1,609.9 678.2,607.0 678.3,604.0 678.4,601.1 678.5,598.0 678.5,595.0 678.6,591.9 678.7,588.8 678.7,585.6 678.8,582.4 678.8,579.2 678.9,575.9 678.9,572.6 679.0,569.3 679.0,565.9 679.1,562.4 679.1,558.9 679.1,555.4 679.1,551.8 679.1,548.2 679.1,544.5 679.1,540.8 679.1,537.0 679.1,533.2 679.0,529.3 679.0,525.3 678.9,521.3 678.8,517.2 678.7,513.1 678.6,508.9 678.5,504.6 678.3,500.3 678.2,495.9 678.0,491.4 677.8,486.8 677.6,482.2 677.3,477.5 677.0,472.7 676.7,467.8 676.3,462.8 675.9,457.7 675.5,452.5 675.1,447.2 674.5,441.8 674.0,436.3 673.3,430.7 672.7,425.0 671.9,419.1 671.1,413.1 670.2,407.0 669.2,400.7 668.1,394.3 666.9,387.7 665.6,381.0 664.1,374.0 662.5,366.9 660.8,359.6 658.9,352.1 656.7,344.4 654.4,336.4 651.8,328.2 648.9,319.8 645.7,311.0 642.1,302.0 638.2,292.6 633.8,282.9 628.9,272.9 623.4,262.4 617.3,251.5 610.5,240.2 602.9,228.3 594.5,215.9 585.1,202.9 574.8,189.3 563.4,174.9 550.8,159.6 537.2,143.5 522.5,126.3 506.7,107.9 489.8,88.2 472.0,66.9 453.3,43.7 433.8,18.4 M720.5,620.7 720.8,618.5 721.0,615.6 721.3,612.8 721.6,609.9 721.9,607.0 722.2,604.0 722.5,601.1 722.8,598.0 723.1,595.0 723.4,591.9 723.7,588.8 724.0,585.6 724.3,582.4 724.6,579.2 724.9,575.9 725.2,572.6 725.5,569.3 725.8,565.9 726.2,562.4 726.5,558.9 726.8,555.4 727.1,551.8 727.5,548.2 727.8,544.5 728.1,540.8 728.4,537.0 728.8,533.2 729.1,529.3 729.4,525.3 729.8,521.3 730.1,517.2 730.4,513.1 730.8,508.9 731.1,504.6 731.4,500.3 731.8,495.9 732.1,491.4 732.4,486.8 732.7,482.2 733.1,477.5 733.4,472.7 733.7,467.8 734.0,462.8 734.3,457.7 734.6,452.5 734.9,447.2 735.1,441.8 735.4,436.3 735.6,430.7 735.8,425.0 736.0,419.1 736.2,413.1 736.4,407.0 736.5,400.7 736.6,394.3 736.7,387.7 736.7,381.0 736.7,374.0 736.6,366.9 736.5,359.6 736.3,352.1 736.0,344.4 735.7,336.4 735.2,328.2 734.7,319.8 734.0,311.0 733.1,302.0 732.1,292.6 730.9,282.9 729.4,272.9 727.7,262.4 725.6,251.5 723.1,240.2 720.2,228.3 716.8,215.9 712.7,202.9 707.8,189.3 702.0,174.9 695.1,159.6 686.9,143.5 677.1,126.3 665.5,107.9 651.8,88.2 635.9,66.9 617.5,43.7 596.8,18.4 M763.1,620.7 763.4,618.5 763.9,615.6 764.3,612.8 764.7,609.9 765.2,607.0 765.6,604.0 766.1,601.1 766.6,598.0 767.0,595.0 767.5,591.9 768.0,588.8 768.5,585.6 769.0,582.4 769.5,579.2 770.0,575.9 770.5,572.6 771.0,569.3 771.5,565.9 772.1,562.4 772.6,558.9 773.2,555.4 773.7,551.8 774.3,548.2 774.9,544.5 775.4,540.8 776.0,537.0 776.6,533.2 777.2,529.3 777.9,525.3 778.5,521.3 779.1,517.2 779.8,513.1 780.4,508.9 781.1,504.6 781.8,500.3 782.5,495.9 783.2,491.4 783.9,486.8 784.6,482.2 785.3,477.5 786.1,472.7 786.8,467.8 787.6,462.8 788.3,457.7 789.1,452.5 789.9,447.2 790.7,441.8 791.6,436.3 792.4,430.7 793.2,425.0 794.1,419.1 795.0,413.1 795.8,407.0 796.7,400.7 797.6,394.3 798.5,387.7 799.5,381.0 800.4,374.0 801.3,366.9 802.3,359.6 803.2,352.1 804.2,344.4 805.1,336.4 806.1,328.2 807.0,319.8 807.9,311.0 808.8,302.0 809.7,292.6 810.6,282.9 811.4,272.9 812.2,262.4 812.9,251.5 813.5,240.2 814.0,228.3 814.4,215.9 814.6,202.9 814.5,189.3 814.2,174.9 813.5,159.6 812.3,143.5 810.4,126.3 807.7,107.9 803.9,88.2 798.5,66.9 791.1,43.7 780.8,18.4 M805.5,620.7 806.0,618.5 806.5,615.6 807.1,612.8 807.6,609.9 808.2,607.0 808.7,604.0 809.3,601.1 809.9,598.0 810.5,595.0 811.1,591.9 811.7,588.8 812.3,585.6 813.0,582.4 813.6,579.2 814.3,575.9 814.9,572.6 815.6,569.3 816.3,565.9 817.0,562.4 817.7,558.9 818.4,555.4 819.1,551.8 819.9,548.2 820.6,544.5 821.4,540.8 822.2,537.0 823.0,533.2 823.8,529.3 824.6,525.3 825.4,521.3 826.3,517.2 827.2,513.1 828.1,508.9 829.0,504.6 829.9,500.3 830.8,495.9 831.8,491.4 832.7,486.8 833.7,482.2 834.7,477.5 835.8,472.7 836.8,467.8 837.9,462.8 839.0,457.7 840.1,452.5 841.3,447.2 842.5,441.8 843.7,436.3 844.9,430.7 846.2,425.0 847.4,419.1 848.8,413.1 850.1,407.0 851.5,400.7 852.9,394.3 854.4,387.7 855.9,381.0 857.4,374.0 859.0,366.9 860.6,359.6 862.2,352.1 863.9,344.4 865.7,336.4 867.5,328.2 869.3,319.8 871.3,311.0 873.2,302.0 875.2,292.6 877.3,282.9 879.5,272.9 881.7,262.4 884.0,251.5 886.3,240.2 888.7,228.3 891.2,215.9 893.8,202.9 896.4,189.3 899.1,174.9 901.8,159.6 904.6,143.5 907.4,126.3 910.2,107.9 912.9,88.2 915.4,66.9 917.7,43.7 919.4,18.4 M847.9,620.7 848.3,618.5 849.0,615.6 849.6,612.8 850.2,609.9 850.9,607.0 851.5,604.0 852.2,601.1 852.9,598.0 853.6,595.0 854.3,591.9 855.0,588.8 855.7,585.6 856.4,582.4 857.2,579.2 857.9,575.9 858.7,572.6 859.5,569.3 860.3,565.9 861.1,562.4 861.9,558.9 862.7,555.4 863.6,551.8 864.5,548.2 865.3,544.5 866.2,540.8 867.1,537.0 868.1,533.2 869.0,529.3 870.0,525.3 871.0,521.3 872.0,517.2 873.0,513.1 874.0,508.9 875.1,504.6 876.2,500.3 877.3,495.9 878.4,491.4 879.6,486.8 880.8,482.2 882.0,477.5 883.2,472.7 884.5,467.8 885.7,462.8 887.1,457.7 888.4,452.5 889.8,447.2 891.2,441.8 892.7,436.3 894.2,430.7 895.7,425.0 897.3,419.1 898.9,413.1 900.5,407.0 902.2,400.7 904.0,394.3 905.8,387.7 907.6,381.0 909.6,374.0 911.5,366.9 913.6,359.6 915.7,352.1 917.8,344.4 920.1,336.4 922.4,328.2 924.8,319.8 927.3,311.0 929.9,302.0 932.5,292.6 935.3,282.9 938.2,272.9 941.3,262.4 944.4,251.5 947.8,240.2 951.2,228.3 954.8,215.9 958.7,202.9 962.7,189.3 966.9,174.9 971.4,159.6 976.1,143.5 981.2,126.3 986.5,107.9 992.3,88.2 998.4,66.9 1005.0,43.7 1012.1,18.4" stroke="#c0e068" stroke-width="1" fill="none"/>
<path d="M84.4,620.7 395.2,202.5 M141.2,620.7 444.4,202.5 M201.9,620.7 496.7,202.5 M239.4,620.7 528.9,202.5 M266.9,620.7 552.5,202.5 M288.9,620.7 571.2,202.5 M307.2,620.7 586.8,202.5 M330.0,620.7 606.3,202.5 M360.3,620.7 632.1,202.5 M384.5,620.7 652.5,202.5 M404.6,620.7 669.6,202.5 M437.2,620.7 697.1,202.5 M463.2,620.7 719.0,202.5 M484.9,620.7 737.3,202.5 M503.5,620.7 752.9,202.5 M519.9,620.7 766.7,202.5 M534.6,620.7 779.0,202.5 M547.9,620.7 790.1,202.5 M571.2,620.7 809.6,202.5 M591.2,620.7 826.3,202.5 M608.8,620.7 840.9,202.5 M624.5,620.7 854.0,202.5 M638.7,620.7 865.8,202.5 M651.6,620.7 876.5,202.5 M663.6,620.7 886.4,202.5 M674.6,620.7 895.6,202.5 M684.9,620.7 904.1,202.5 M694.5,620.7 912.0,202.5 M703.6,620.7 919.5,202.5 M720.2,620.7 933.3,202.5 M735.2,620.7 945.6,202.5 M748.9,620.7 956.9,202.5 M761.4,620.7 967.2,202.5" stroke="#48bcb0" stroke-width="1" stroke-dasharray="3,4" fill="none"/>
<path d="M243.6,645 L640,256" stroke="#1c20c0" stroke-width="1.2" fill="none"/>
<path d="M412.2,645 L1052.2,17.5" stroke="#c040c0" stroke-width="1.5" fill="none"/>
<path d="M513.0,645 L1153.0,17.5" stroke="#d098d8" stroke-width="1" stroke-dasharray="18,10" fill="none"/>
</g>
<path d="M240,17.5 H835.7 M240,125.7 H835.7 M240,202.5 H835.7 M240,262.1 H835.7 M240,310.7 H835.7 M240,387.5 H835.7 M240,447.1 H835.7 M240,495.7 H835.7 M240,536.9 H835.7 M240,572.5 H835.7 M240,588.7 H835.7 M240,603.9 H835.7 M240,611.3 H835.7 M240,632.1 H835.7" stroke="#b8b4b0" stroke-width="1" fill="none"/>
<rect x="632" y="18.5" width="203" height="375.5" fill="#000"/>
<defs><clipPath id="cape"><polygon points="474.7,108.2 477.9,112.0 481.1,115.7 484.3,119.4 487.5,123.0 490.6,126.6 493.7,130.1 496.7,133.6 499.7,137.0 502.7,140.4 505.6,143.8 508.5,147.1 511.4,150.3 514.2,153.6 517.0,156.7 519.8,159.9 522.5,163.0 525.1,166.1 527.8,169.1 530.4,172.1 532.9,175.1 535.4,178.0 537.9,181.0 540.4,183.8 542.7,186.7 545.1,189.5 547.4,192.3 549.7,195.0 552.0,197.8 554.2,200.5 556.3,203.2 558.5,205.8 560.6,208.4 562.6,211.0 564.6,213.6 566.6,216.1 568.6,218.7 570.5,221.2 572.4,223.6 574.2,226.1 576.0,228.5 577.8,230.9 579.5,233.3 581.2,235.7 582.9,238.0 584.5,240.4 586.2,242.7 587.7,245.0 589.3,247.2 590.8,249.5 592.3,251.7 593.7,253.9 595.2,256.1 596.6,258.3 598.0,260.4 599.3,262.6 600.6,264.7 601.9,266.8 603.2,268.9 604.4,271.0 605.6,273.0 606.8,275.1 608.0,277.1 609.2,279.1 610.3,281.1 611.4,283.1 612.5,285.1 613.5,287.0 614.6,288.9 615.6,290.9 616.6,292.8 617.5,294.7 618.5,296.6 619.4,298.4 620.4,300.3 621.3,302.1 622.1,304.0 623.0,305.8 623.9,307.6 624.7,309.4 625.5,311.2 626.3,312.9 627.1,314.7 627.9,316.4 628.6,318.2 629.4,319.9 630.1,321.6 630.8,323.3 631.5,325.0 632.2,326.7 632.9,328.4 633.5,330.0 634.2,331.7 634.8,333.3 635.4,334.9 636.0,336.6 636.6,338.2 637.2,339.8 637.8,341.4 638.4,342.9 638.9,344.5 639.5,346.1 640.0,347.6 640.5,349.2 641.0,350.7 641.5,352.2 642.0,353.8 642.5,355.3 643.0,356.8 643.5,358.3 643.9,359.7 644.4,361.2 644.8,362.7 645.3,364.2 645.7,365.6 646.1,367.0 646.5,368.5 646.9,369.9 647.3,371.3 647.7,372.8 648.1,374.2 648.5,375.6 648.9,376.9 649.2,378.3 649.6,379.7 649.9,381.1 650.3,382.4 650.6,383.8 651.0,385.2 651.3,386.5 651.6,387.8 651.9,389.2 652.2,390.5 652.5,391.8 652.8,393.1 653.1,394.4 653.4,395.7 653.7,397.0 654.0,398.3 654.3,399.6 654.5,400.8 654.8,402.1 655.1,403.4 655.3,404.6 655.6,405.9 655.8,407.1 656.1,408.3 656.3,409.6 656.6,410.8 656.8,412.0 657.0,413.2 657.2,414.4 657.5,415.7 657.7,416.8 657.9,418.0 658.1,419.2 658.3,420.4 658.5,421.6 658.7,422.8 658.9,423.9 659.1,425.1 659.3,426.2 659.5,427.4 659.7,428.5 659.9,429.7 660.0,430.8 660.2,432.0 660.4,433.1 660.6,434.2 660.7,435.3 660.9,436.4 661.0,437.5 661.2,438.6 661.4,439.7 661.5,440.8 661.7,441.9 661.8,443.0 662.0,444.1 662.1,445.2 662.2,446.3 662.4,447.3 662.5,448.4 662.7,449.4 662.8,450.5 662.9,451.6 663.1,452.6 663.2,453.6 663.3,454.7 663.4,455.7 663.5,456.8 663.7,457.8 663.8,458.8 663.9,459.8 664.0,460.8 664.1,461.9 664.2,462.9 664.3,463.9 664.4,464.9 664.5,465.9 664.6,466.9 664.7,467.8 664.8,468.8 664.9,469.8 665.0,470.8 665.1,471.8 665.2,472.7 665.3,473.7 665.4,474.7 665.5,475.6 665.6,476.6 665.7,477.5 665.7,478.5 665.8,479.4 665.9,480.4 666.0,481.3 666.1,482.3 666.1,483.2 666.2,484.1 666.3,485.1 666.4,486.0 666.4,486.9 666.5,487.8 666.6,488.7 666.6,489.6 666.7,490.6 666.8,491.5 666.8,492.4 666.9,493.3 667.0,494.2 667.0,495.0 667.1,495.9 667.2,496.8 667.2,497.7 667.3,498.6 667.3,499.5 667.4,500.3 667.4,501.2 667.5,502.1 667.5,503.0 667.6,503.8 667.6,504.7 667.7,505.5 667.7,506.4 667.8,507.3 667.8,508.1 667.9,509.0 667.9,509.8 668.0,510.6 668.0,511.5 668.1,512.3 668.1,513.2 668.2,514.0 668.2,514.8 668.2,515.6 668.3,516.5 668.3,517.3 668.4,518.1 668.4,518.9 668.4,519.7 668.5,520.5 668.5,521.4 668.5,522.2 668.6,523.0 668.6,523.8 668.6,524.6 668.7,525.4 668.7,526.2 668.7,527.0 668.8,527.7 668.8,528.5 668.8,529.3 668.8,530.1 668.9,530.9 668.9,531.7 668.9,532.4 668.9,533.2 669.0,534.0 669.0,534.8 669.0,535.5 669.0,536.3 669.1,537.1 669.1,537.8 669.1,538.6 669.1,539.3 669.2,540.1 669.2,540.8 669.2,541.6 669.2,542.3 669.2,543.1 669.3,543.8 669.3,544.6 669.3,545.3 669.3,546.0 669.3,546.8 669.3,547.5 669.4,548.2 669.4,549.0 669.4,549.7 669.4,550.4 669.4,551.2 669.4,551.9 669.4,552.6 669.5,553.3 669.5,554.0 669.5,554.7 669.5,555.5 669.5,556.2 669.5,556.9 669.5,557.6 669.5,558.3 669.6,559.0 669.6,559.7 669.6,560.4 669.6,561.1 669.6,561.8 669.6,562.5 669.6,563.2 669.6,563.9 669.6,564.5 669.6,565.2 669.6,565.9 669.6,566.6 669.6,567.3 669.7,568.0 669.7,568.6 669.7,569.3 669.7,570.0 669.7,570.7 669.7,571.3 669.7,572.0 669.7,572.7 669.7,573.3 669.7,574.0 669.7,574.7 669.7,575.3 669.7,576.0 669.7,576.6 669.7,577.3 669.7,577.9 669.7,578.6 669.7,579.3 669.7,579.9 669.7,580.6 669.7,581.2 669.7,581.8 669.7,582.5 669.7,583.1 669.7,583.8 669.7,584.4 669.7,585.0 669.7,585.7 669.7,586.3 669.7,586.9 669.7,587.6 669.7,588.2 669.7,588.8 669.7,589.5 669.7,590.1 669.7,590.7 669.7,591.3 669.7,592.0 669.7,592.6 669.7,593.2 669.7,593.8 669.7,594.4 669.7,595.0 669.7,595.7 669.7,596.3 669.7,596.9 669.7,597.5 669.7,598.1 669.7,598.7 669.7,599.3 668.3,600.0 660.5,600.0 654.4,593.8 643.7,578.6 634.5,566.4 620.8,551.1 611.7,538.9 608.6,525.2 599.5,511.5 588.8,499.3 576.6,485.6 565.9,474.9 555.2,456.6 551.6,438.3 552.2,426.0 552.0,420.8 552.0,389.2 543.3,372.0 540.0,361.9 535.7,354.5 524.8,332.7 500.0,300.0 470.0,250.0"/></clipPath></defs>
<polygon points="474.7,108.2 477.9,112.0 481.1,115.7 484.3,119.4 487.5,123.0 490.6,126.6 493.7,130.1 496.7,133.6 499.7,137.0 502.7,140.4 505.6,143.8 508.5,147.1 511.4,150.3 514.2,153.6 517.0,156.7 519.8,159.9 522.5,163.0 525.1,166.1 527.8,169.1 530.4,172.1 532.9,175.1 535.4,178.0 537.9,181.0 540.4,183.8 542.7,186.7 545.1,189.5 547.4,192.3 549.7,195.0 552.0,197.8 554.2,200.5 556.3,203.2 558.5,205.8 560.6,208.4 562.6,211.0 564.6,213.6 566.6,216.1 568.6,218.7 570.5,221.2 572.4,223.6 574.2,226.1 576.0,228.5 577.8,230.9 579.5,233.3 581.2,235.7 582.9,238.0 584.5,240.4 586.2,242.7 587.7,245.0 589.3,247.2 590.8,249.5 592.3,251.7 593.7,253.9 595.2,256.1 596.6,258.3 598.0,260.4 599.3,262.6 600.6,264.7 601.9,266.8 603.2,268.9 604.4,271.0 605.6,273.0 606.8,275.1 608.0,277.1 609.2,279.1 610.3,281.1 611.4,283.1 612.5,285.1 613.5,287.0 614.6,288.9 615.6,290.9 616.6,292.8 617.5,294.7 618.5,296.6 619.4,298.4 620.4,300.3 621.3,302.1 622.1,304.0 623.0,305.8 623.9,307.6 624.7,309.4 625.5,311.2 626.3,312.9 627.1,314.7 627.9,316.4 628.6,318.2 629.4,319.9 630.1,321.6 630.8,323.3 631.5,325.0 632.2,326.7 632.9,328.4 633.5,330.0 634.2,331.7 634.8,333.3 635.4,334.9 636.0,336.6 636.6,338.2 637.2,339.8 637.8,341.4 638.4,342.9 638.9,344.5 639.5,346.1 640.0,347.6 640.5,349.2 641.0,350.7 641.5,352.2 642.0,353.8 642.5,355.3 643.0,356.8 643.5,358.3 643.9,359.7 644.4,361.2 644.8,362.7 645.3,364.2 645.7,365.6 646.1,367.0 646.5,368.5 646.9,369.9 647.3,371.3 647.7,372.8 648.1,374.2 648.5,375.6 648.9,376.9 649.2,378.3 649.6,379.7 649.9,381.1 650.3,382.4 650.6,383.8 651.0,385.2 651.3,386.5 651.6,387.8 651.9,389.2 652.2,390.5 652.5,391.8 652.8,393.1 653.1,394.4 653.4,395.7 653.7,397.0 654.0,398.3 654.3,399.6 654.5,400.8 654.8,402.1 655.1,403.4 655.3,404.6 655.6,405.9 655.8,407.1 656.1,408.3 656.3,409.6 656.6,410.8 656.8,412.0 657.0,413.2 657.2,414.4 657.5,415.7 657.7,416.8 657.9,418.0 658.1,419.2 658.3,420.4 658.5,421.6 658.7,422.8 658.9,423.9 659.1,425.1 659.3,426.2 659.5,427.4 659.7,428.5 659.9,429.7 660.0,430.8 660.2,432.0 660.4,433.1 660.6,434.2 660.7,435.3 660.9,436.4 661.0,437.5 661.2,438.6 661.4,439.7 661.5,440.8 661.7,441.9 661.8,443.0 662.0,444.1 662.1,445.2 662.2,446.3 662.4,447.3 662.5,448.4 662.7,449.4 662.8,450.5 662.9,451.6 663.1,452.6 663.2,453.6 663.3,454.7 663.4,455.7 663.5,456.8 663.7,457.8 663.8,458.8 663.9,459.8 664.0,460.8 664.1,461.9 664.2,462.9 664.3,463.9 664.4,464.9 664.5,465.9 664.6,466.9 664.7,467.8 664.8,468.8 664.9,469.8 665.0,470.8 665.1,471.8 665.2,472.7 665.3,473.7 665.4,474.7 665.5,475.6 665.6,476.6 665.7,477.5 665.7,478.5 665.8,479.4 665.9,480.4 666.0,481.3 666.1,482.3 666.1,483.2 666.2,484.1 666.3,485.1 666.4,486.0 666.4,486.9 666.5,487.8 666.6,488.7 666.6,489.6 666.7,490.6 666.8,491.5 666.8,492.4 666.9,493.3 667.0,494.2 667.0,495.0 667.1,495.9 667.2,496.8 667.2,497.7 667.3,498.6 667.3,499.5 667.4,500.3 667.4,501.2 667.5,502.1 667.5,503.0 667.6,503.8 667.6,504.7 667.7,505.5 667.7,506.4 667.8,507.3 667.8,508.1 667.9,509.0 667.9,509.8 668.0,510.6 668.0,511.5 668.1,512.3 668.1,513.2 668.2,514.0 668.2,514.8 668.2,515.6 668.3,516.5 668.3,517.3 668.4,518.1 668.4,518.9 668.4,519.7 668.5,520.5 668.5,521.4 668.5,522.2 668.6,523.0 668.6,523.8 668.6,524.6 668.7,525.4 668.7,526.2 668.7,527.0 668.8,527.7 668.8,528.5 668.8,529.3 668.8,530.1 668.9,530.9 668.9,531.7 668.9,532.4 668.9,533.2 669.0,534.0 669.0,534.8 669.0,535.5 669.0,536.3 669.1,537.1 669.1,537.8 669.1,538.6 669.1,539.3 669.2,540.1 669.2,540.8 669.2,541.6 669.2,542.3 669.2,543.1 669.3,543.8 669.3,544.6 669.3,545.3 669.3,546.0 669.3,546.8 669.3,547.5 669.4,548.2 669.4,549.0 669.4,549.7 669.4,550.4 669.4,551.2 669.4,551.9 669.4,552.6 669.5,553.3 669.5,554.0 669.5,554.7 669.5,555.5 669.5,556.2 669.5,556.9 669.5,557.6 669.5,558.3 669.6,559.0 669.6,559.7 669.6,560.4 669.6,561.1 669.6,561.8 669.6,562.5 669.6,563.2 669.6,563.9 669.6,564.5 669.6,565.2 669.6,565.9 669.6,566.6 669.6,567.3 669.7,568.0 669.7,568.6 669.7,569.3 669.7,570.0 669.7,570.7 669.7,571.3 669.7,572.0 669.7,572.7 669.7,573.3 669.7,574.0 669.7,574.7 669.7,575.3 669.7,576.0 669.7,576.6 669.7,577.3 669.7,577.9 669.7,578.6 669.7,579.3 669.7,579.9 669.7,580.6 669.7,581.2 669.7,581.8 669.7,582.5 669.7,583.1 669.7,583.8 669.7,584.4 669.7,585.0 669.7,585.7 669.7,586.3 669.7,586.9 669.7,587.6 669.7,588.2 669.7,588.8 669.7,589.5 669.7,590.1 669.7,590.7 669.7,591.3 669.7,592.0 669.7,592.6 669.7,593.2 669.7,593.8 669.7,594.4 669.7,595.0 669.7,595.7 669.7,596.3 669.7,596.9 669.7,597.5 669.7,598.1 669.7,598.7 669.7,599.3 668.3,600.0 660.5,600.0 654.4,593.8 643.7,578.6 634.5,566.4 620.8,551.1 611.7,538.9 608.6,525.2 599.5,511.5 588.8,499.3 576.6,485.6 565.9,474.9 555.2,456.6 551.6,438.3 552.2,426.0 552.0,420.8 552.0,389.2 543.3,372.0 540.0,361.9 535.7,354.5 524.8,332.7 500.0,300.0 470.0,250.0" fill="#ff0000"/>
<polygon points="692.3,120.0 335.3,470.0 507.5,470.0 864.5,120.0" fill="#64c6ff" clip-path="url(#cape)"/>
<polyline points="500.0,300.0 524.8,332.7 535.7,354.5 540.0,361.9 543.3,372.0 552.0,389.2 552.0,420.8 552.2,426.0" stroke="#ff1010" stroke-width="2" fill="none"/>
<polyline points="474.7,108.2 477.9,112.0 481.1,115.7 484.3,119.4 487.5,123.0 490.6,126.6 493.7,130.1 496.7,133.6 499.7,137.0 502.7,140.4 505.6,143.8 508.5,147.1 511.4,150.3 514.2,153.6 517.0,156.7 519.8,159.9 522.5,163.0 525.1,166.1 527.8,169.1 530.4,172.1 532.9,175.1 535.4,178.0 537.9,181.0 540.4,183.8 542.7,186.7 545.1,189.5 547.4,192.3 549.7,195.0 552.0,197.8 554.2,200.5 556.3,203.2 558.5,205.8 560.6,208.4 562.6,211.0 564.6,213.6 566.6,216.1 568.6,218.7 570.5,221.2 572.4,223.6 574.2,226.1 576.0,228.5 577.8,230.9 579.5,233.3 581.2,235.7 582.9,238.0 584.5,240.4 586.2,242.7 587.7,245.0 589.3,247.2 590.8,249.5 592.3,251.7 593.7,253.9 595.2,256.1 596.6,258.3 598.0,260.4 599.3,262.6 600.6,264.7 601.9,266.8 603.2,268.9 604.4,271.0 605.6,273.0 606.8,275.1 608.0,277.1 609.2,279.1 610.3,281.1 611.4,283.1 612.5,285.1 613.5,287.0 614.6,288.9 615.6,290.9 616.6,292.8 617.5,294.7 618.5,296.6 619.4,298.4 620.4,300.3 621.3,302.1 622.1,304.0 623.0,305.8 623.9,307.6 624.7,309.4 625.5,311.2 626.3,312.9 627.1,314.7 627.9,316.4 628.6,318.2 629.4,319.9 630.1,321.6 630.8,323.3 631.5,325.0 632.2,326.7 632.9,328.4 633.5,330.0 634.2,331.7 634.8,333.3 635.4,334.9 636.0,336.6 636.6,338.2 637.2,339.8 637.8,341.4 638.4,342.9 638.9,344.5 639.5,346.1 640.0,347.6 640.5,349.2 641.0,350.7 641.5,352.2 642.0,353.8 642.5,355.3 643.0,356.8 643.5,358.3 643.9,359.7 644.4,361.2 644.8,362.7 645.3,364.2 645.7,365.6 646.1,367.0 646.5,368.5 646.9,369.9 647.3,371.3 647.7,372.8 648.1,374.2 648.5,375.6 648.9,376.9 649.2,378.3 649.6,379.7 649.9,381.1 650.3,382.4 650.6,383.8 651.0,385.2 651.3,386.5 651.6,387.8 651.9,389.2 652.2,390.5 652.5,391.8 652.8,393.1 653.1,394.4 653.4,395.7 653.7,397.0 654.0,398.3 654.3,399.6 654.5,400.8 654.8,402.1 655.1,403.4 655.3,404.6 655.6,405.9 655.8,407.1 656.1,408.3 656.3,409.6 656.6,410.8 656.8,412.0 657.0,413.2 657.2,414.4 657.5,415.7 657.7,416.8 657.9,418.0 658.1,419.2 658.3,420.4 658.5,421.6 658.7,422.8 658.9,423.9 659.1,425.1 659.3,426.2 659.5,427.4 659.7,428.5 659.9,429.7 660.0,430.8 660.2,432.0 660.4,433.1 660.6,434.2 660.7,435.3 660.9,436.4 661.0,437.5 661.2,438.6 661.4,439.7 661.5,440.8 661.7,441.9 661.8,443.0 662.0,444.1 662.1,445.2 662.2,446.3 662.4,447.3 662.5,448.4 662.7,449.4 662.8,450.5 662.9,451.6 663.1,452.6 663.2,453.6 663.3,454.7 663.4,455.7 663.5,456.8 663.7,457.8 663.8,458.8 663.9,459.8 664.0,460.8 664.1,461.9 664.2,462.9 664.3,463.9 664.4,464.9 664.5,465.9 664.6,466.9 664.7,467.8 664.8,468.8 664.9,469.8 665.0,470.8 665.1,471.8 665.2,472.7 665.3,473.7 665.4,474.7 665.5,475.6 665.6,476.6 665.7,477.5 665.7,478.5 665.8,479.4 665.9,480.4 666.0,481.3 666.1,482.3 666.1,483.2 666.2,484.1 666.3,485.1 666.4,486.0 666.4,486.9 666.5,487.8 666.6,488.7 666.6,489.6 666.7,490.6 666.8,491.5 666.8,492.4 666.9,493.3 667.0,494.2 667.0,495.0 667.1,495.9 667.2,496.8 667.2,497.7 667.3,498.6 667.3,499.5 667.4,500.3 667.4,501.2 667.5,502.1 667.5,503.0 667.6,503.8 667.6,504.7 667.7,505.5 667.7,506.4 667.8,507.3 667.8,508.1 667.9,509.0 667.9,509.8 668.0,510.6 668.0,511.5 668.1,512.3 668.1,513.2 668.2,514.0 668.2,514.8 668.2,515.6 668.3,516.5 668.3,517.3 668.4,518.1 668.4,518.9 668.4,519.7 668.5,520.5 668.5,521.4 668.5,522.2 668.6,523.0 668.6,523.8 668.6,524.6 668.7,525.4 668.7,526.2 668.7,527.0 668.8,527.7 668.8,528.5 668.8,529.3 668.8,530.1 668.9,530.9 668.9,531.7 668.9,532.4 668.9,533.2 669.0,534.0 669.0,534.8 669.0,535.5 669.0,536.3 669.1,537.1 669.1,537.8 669.1,538.6 669.1,539.3 669.2,540.1 669.2,540.8 669.2,541.6 669.2,542.3 669.2,543.1 669.3,543.8 669.3,544.6 669.3,545.3 669.3,546.0 669.3,546.8 669.3,547.5 669.4,548.2 669.4,549.0 669.4,549.7 669.4,550.4 669.4,551.2 669.4,551.9 669.4,552.6 669.5,553.3 669.5,554.0 669.5,554.7 669.5,555.5 669.5,556.2 669.5,556.9 669.5,557.6 669.5,558.3 669.6,559.0 669.6,559.7 669.6,560.4 669.6,561.1 669.6,561.8 669.6,562.5 669.6,563.2 669.6,563.9 669.6,564.5 669.6,565.2 669.6,565.9 669.6,566.6 669.6,567.3 669.7,568.0 669.7,568.6 669.7,569.3 669.7,570.0 669.7,570.7 669.7,571.3 669.7,572.0 669.7,572.7 669.7,573.3 669.7,574.0 669.7,574.7 669.7,575.3 669.7,576.0 669.7,576.6 669.7,577.3 669.7,577.9 669.7,578.6 669.7,579.3 669.7,579.9 669.7,580.6 669.7,581.2 669.7,581.8 669.7,582.5 669.7,583.1 669.7,583.8 669.7,584.4 669.7,585.0 669.7,585.7 669.7,586.3 669.7,586.9 669.7,587.6 669.7,588.2 669.7,588.8 669.7,589.5 669.7,590.1 669.7,590.7 669.7,591.3 669.7,592.0 669.7,592.6 669.7,593.2 669.7,593.8 669.7,594.4 669.7,595.0 669.7,595.7 669.7,596.3 669.7,596.9 669.7,597.5 669.7,598.1 669.7,598.7 669.7,599.3 669.4,603.2" stroke="#f0c4c4" stroke-width="2.6" fill="none" shape-rendering="auto"/>
<rect x="523.5" y="333.0" width="4" height="4" fill="#ff1010"/>
<rect x="533.5" y="353.0" width="4" height="4" fill="#ff1010"/>
<rect x="542.0" y="370.0" width="4" height="4" fill="#ff1010"/>
<rect x="549.5" y="387.0" width="4" height="4" fill="#ff1010"/>
<rect x="550.0" y="403.0" width="4" height="4" fill="#ff1010"/>
<rect x="550.0" y="417.0" width="4" height="4" fill="#ff1010"/>
<polyline points="470.0,424.0 476.0,427.5 481.8,430.9 507.2,443.6 532.6,454.5 553.7,464.2 565.9,476.4 562.9,485.6 559.8,494.7 556.8,505.4 559.8,514.5 573.5,525.2 588.8,534.4 605.6,542.0 619.3,551.1 631.5,564.9 643.7,581.6 654.4,595.4 658.9,603.0 657.4,615.2 660.5,621.3" stroke="#0a1ee6" stroke-width="2.6" fill="none" shape-rendering="auto"/>
<line x1="660.6" y1="621.3" x2="669.4" y2="603.2" stroke="#c8c8c8" stroke-width="1.5"/>
<line x1="669.4" y1="603.2" x2="701.1" y2="621.3" stroke="#ff1010" stroke-width="3" shape-rendering="auto"/>
<path d="M636,603.2 H742 M662.4,599 H691.4 M628,621.7 H660.6" stroke="#40d8e0" stroke-width="1" fill="none"/>
<circle cx="660.6" cy="599.3" r="2.8" fill="#40e0e8" shape-rendering="auto"/>
<circle cx="669.4" cy="603.2" r="2.8" fill="#40e0e8" shape-rendering="auto"/>
<circle cx="660.6" cy="621.3" r="2.8" fill="#40e0e8" shape-rendering="auto"/>
<circle cx="701.1" cy="621.3" r="2.8" fill="#40e0e8" shape-rendering="auto"/>
<path d="M243.6,17.5 V645.5 H835.7 V17.5" stroke="#ffffff" stroke-width="1" fill="none"/>
<path d="M240,17.5 H1022" stroke="#c8c8c8" stroke-width="1" fill="none"/>
<path d="M244.2,645 V648 M328.2,645 V648 M412.2,645 V648 M496.2,645 V648 M580.2,645 V648 M664.2,645 V648 M748.2,645 V648 M832.2,645 V648 M262.9,645 V667 M356.2,645 V667 M449.5,645 V667 M542.9,645 V667 M636.2,645 V667 M729.5,645 V667 M822.9,645 V667" stroke="#e0e0e0" stroke-width="1" fill="none"/>
</svg>
<svg width="1024" height="688" viewBox="0 0 1024 688" style="position:absolute;left:0;top:0">
<text x="233.0" y="21.7" font-family="Liberation Sans" font-size="13" text-anchor="end" fill="#fff" letter-spacing="-0.6">100</text>
<text x="233.0" y="129.7" font-family="Liberation Sans" font-size="13" text-anchor="end" fill="#fff" letter-spacing="-0.6">150</text>
<text x="233.0" y="206.7" font-family="Liberation Sans" font-size="13" text-anchor="end" fill="#fff" letter-spacing="-0.6">200</text>
<text x="233.0" y="266.7" font-family="Liberation Sans" font-size="13" text-anchor="end" fill="#fff" letter-spacing="-0.6">250</text>
<text x="233.0" y="315.4" font-family="Liberation Sans" font-size="13" text-anchor="end" fill="#fff" letter-spacing="-0.6">300</text>
<text x="233.0" y="391.3" font-family="Liberation Sans" font-size="13" text-anchor="end" fill="#fff" letter-spacing="-0.6">400</text>
<text x="233.0" y="451.3" font-family="Liberation Sans" font-size="13" text-anchor="end" fill="#fff" letter-spacing="-0.6">500</text>
<text x="233.0" y="500.6" font-family="Liberation Sans" font-size="13" text-anchor="end" fill="#fff" letter-spacing="-0.6">600</text>
<text x="233.0" y="541.5" font-family="Liberation Sans" font-size="13" text-anchor="end" fill="#fff" letter-spacing="-0.6">700</text>
<text x="233.0" y="576.7" font-family="Liberation Sans" font-size="13" text-anchor="end" fill="#fff" letter-spacing="-0.6">800</text>
<text x="233.0" y="593.2" font-family="Liberation Sans" font-size="13" text-anchor="end" fill="#fff" letter-spacing="-0.6">850</text>
<text x="233.0" y="608.9" font-family="Liberation Sans" font-size="13" text-anchor="end" fill="#fff" letter-spacing="-0.6">900</text>
<text x="233.0" y="619.8" font-family="Liberation Sans" font-size="13" text-anchor="end" fill="#fff" letter-spacing="-0.6">925</text>
<text x="233.0" y="636.9" font-family="Liberation Sans" font-size="13" text-anchor="end" fill="#fff" letter-spacing="-0.6">1000</text>
<text x="233.0" y="649.2" font-family="Liberation Sans" font-size="13" text-anchor="end" fill="#fff" letter-spacing="-0.6">1050</text>
<text x="184.6" y="19.5" font-family="Liberation Sans" font-size="13" text-anchor="start" fill="#fff" >mb</text>
<text x="240.0" y="661.7" font-family="Liberation Sans" font-size="13" text-anchor="middle" fill="#fff" >-20</text>
<text x="323.8" y="661.7" font-family="Liberation Sans" font-size="13" text-anchor="middle" fill="#fff" >-10</text>
<text x="412.9" y="661.7" font-family="Liberation Sans" font-size="13" text-anchor="middle" fill="#fff" >0</text>
<text x="494.9" y="661.7" font-family="Liberation Sans" font-size="13" text-anchor="middle" fill="#fff" >10</text>
<text x="579.3" y="661.7" font-family="Liberation Sans" font-size="13" text-anchor="middle" fill="#fff" >20</text>
<text x="663.0" y="661.7" font-family="Liberation Sans" font-size="13" text-anchor="middle" fill="#fff" >30</text>
<text x="747.0" y="661.7" font-family="Liberation Sans" font-size="13" text-anchor="middle" fill="#fff" >40</text>
<text x="830.0" y="661.7" font-family="Liberation Sans" font-size="13" text-anchor="middle" fill="#fff" >50</text>
<text x="512.0" y="661.7" font-family="Liberation Sans" font-size="13" text-anchor="middle" fill="#d8a8e0" >12</text>
<text x="851.0" y="661.7" font-family="Liberation Sans" font-size="13" text-anchor="middle" fill="#fff" >°C</text>
<text x="262.9" y="677.9" font-family="Liberation Sans" font-size="11" text-anchor="middle" fill="#fff" >0</text>
<text x="356.2" y="677.9" font-family="Liberation Sans" font-size="11" text-anchor="middle" fill="#fff" >20</text>
<text x="449.5" y="677.9" font-family="Liberation Sans" font-size="11" text-anchor="middle" fill="#fff" >40</text>
<text x="542.9" y="677.9" font-family="Liberation Sans" font-size="11" text-anchor="middle" fill="#fff" >60</text>
<text x="636.2" y="677.9" font-family="Liberation Sans" font-size="11" text-anchor="middle" fill="#fff" >80</text>
<text x="729.5" y="677.9" font-family="Liberation Sans" font-size="11" text-anchor="middle" fill="#fff" >100</text>
<text x="820.9" y="677.9" font-family="Liberation Sans" font-size="11" text-anchor="middle" fill="#fff" >120F</text>
<text x="611.4" y="606.2" font-family="Liberation Mono" font-size="13" text-anchor="start" fill="#40d8e0" >LFC</text>
<text x="696.7" y="602.3" font-family="Liberation Mono" font-size="13" text-anchor="start" fill="#40d8e0" >CCL</text>
<text x="745.9" y="607.5" font-family="Liberation Mono" font-size="13" text-anchor="start" fill="#40d8e0" >LCL</text>
<text x="592.5" y="625.2" font-family="Liberation Mono" font-size="13" text-anchor="start" fill="#40d8e0" >Lift</text>
</svg>
<svg width="240" height="688" viewBox="0 0 240 688" style="position:absolute;left:0;top:0">
<rect x="8.5" y="11.5" width="115" height="18" fill="#000" stroke="#f0f000" stroke-width="1.2"/>
<text x="64.8" y="24.0" font-family="Liberation Mono" font-size="13" text-anchor="middle" fill="#fff" >22 of 85</text>
<rect x="8" y="31" width="116" height="19" fill="#ffff00"/>
<path d="M27.3,31 V50 M46.6,31 V50 M66.3,31 V50 M85.3,31 V50 M104.7,31 V50" stroke="#000" stroke-width="1"/>
<text x="18.0" y="45.2" font-family="Liberation Sans" font-size="13" text-anchor="middle" fill="#000" font-weight="bold">|&lt;</text>
<text x="37.0" y="45.2" font-family="Liberation Sans" font-size="13" text-anchor="middle" fill="#000" font-weight="bold">«</text>
<text x="56.5" y="45.2" font-family="Liberation Sans" font-size="13" text-anchor="middle" fill="#000" font-weight="bold">&lt;</text>
<text x="75.8" y="45.2" font-family="Liberation Sans" font-size="13" text-anchor="middle" fill="#000" font-weight="bold">&gt;</text>
<text x="95.0" y="45.2" font-family="Liberation Sans" font-size="13" text-anchor="middle" fill="#000" font-weight="bold">»</text>
<text x="114.3" y="45.2" font-family="Liberation Sans" font-size="13" text-anchor="middle" fill="#000" font-weight="bold">&gt;|</text>
<rect x="10.5" y="65.5" width="159" height="150" fill="#000" stroke="#e8e8e8" stroke-width="1"/>
<rect x="11" y="66" width="158" height="20.4" fill="#000096"/>
<path d="M10.5,86.5 H169.5" stroke="#e8e8e8" stroke-width="1"/>
<path d="M10.5,151.5 H169.5 M10.5,172.5 H169.5" stroke="#a0a0a0" stroke-width="1"/>
<text x="90.0" y="81.0" font-family="Liberation Mono" font-size="13" text-anchor="middle" fill="#fff" >Parcel Data</text>
<text x="16.8" y="103.0" font-family="Liberation Mono" font-size="13" text-anchor="start" fill="#fff" xml:space="preserve">Pres:</text>
<text x="16.8" y="117.3" font-family="Liberation Mono" font-size="13" text-anchor="start" fill="#fff" xml:space="preserve"> Hgt:</text>
<text x="16.8" y="131.4" font-family="Liberation Mono" font-size="13" text-anchor="start" fill="#fff" xml:space="preserve">Temp:</text>
<text x="16.8" y="145.7" font-family="Liberation Mono" font-size="13" text-anchor="start" fill="#fff" xml:space="preserve">  Td:</text>
<text x="16.8" y="166.8" font-family="Liberation Mono" font-size="13" text-anchor="start" fill="#fff" xml:space="preserve">Tmax:</text>
<text x="16.8" y="188.8" font-family="Liberation Mono" font-size="13" text-anchor="start" fill="#fff" xml:space="preserve">Wind:</text>
<text x="16.8" y="203.1" font-family="Liberation Mono" font-size="13" text-anchor="start" fill="#fff" xml:space="preserve"> Hgt:</text>
<path d="M73.2,232 V375 M107.6,232 V375 M140.8,232 V375 M173.9,232 V375 M30,261.4 H206.5 M30,290.4 H206.5 M30,318.5 H206.5 M30,347.5 H206.5" stroke="#a0a0a0" stroke-width="1"/>
<rect x="39.5" y="232" width="167" height="143.5" fill="none" stroke="#fff" stroke-width="2"/>
<path d="M8,376 H207" stroke="#fff" stroke-width="2"/>
<polyline points="43.5,272.3 43.5,301.6 52.5,320.7 82.9,330.4 97.6,321.8 150.9,290.6 150.9,272.8" stroke="#a040b0" stroke-width="1.2" fill="none"/>
<polyline points="101.4,272.3 97.6,319.6 121.2,341.4 147,329.8 189,321.6" stroke="#e02020" stroke-width="1.2" fill="none"/>
<polyline points="43.5,350 100,349 125.4,347.5 158.5,333 189,326.7" stroke="#1010e0" stroke-width="1.5" fill="none"/>
<circle cx="130.5" cy="232" r="6.3" fill="#fff"/>
<text x="123.5" y="248.2" font-family="Liberation Sans" font-size="13" text-anchor="middle" fill="#fff" >Storm Character</text>
<text x="2.5" y="241.8" font-family="Liberation Sans" font-size="13" text-anchor="start" fill="#fff" >CAPE</text>
<text x="34.5" y="266.1" font-family="Liberation Sans" font-size="13" text-anchor="end" fill="#fff" >4000</text>
<text x="34.5" y="295.1" font-family="Liberation Sans" font-size="13" text-anchor="end" fill="#fff" >3000</text>
<text x="34.5" y="323.2" font-family="Liberation Sans" font-size="13" text-anchor="end" fill="#fff" >2000</text>
<text x="34.5" y="352.2" font-family="Liberation Sans" font-size="13" text-anchor="end" fill="#fff" >1000</text>
<text x="8.3" y="393.7" font-family="Liberation Sans" font-size="13" text-anchor="start" fill="#fff" >Shear</text>
<text x="42.0" y="397.6" font-family="Liberation Sans" font-size="10" text-anchor="start" fill="#fff" >4km</text>
<text x="73.2" y="393.7" font-family="Liberation Sans" font-size="13" text-anchor="middle" fill="#fff" >10</text>
<text x="107.6" y="393.7" font-family="Liberation Sans" font-size="13" text-anchor="middle" fill="#fff" >20</text>
<text x="140.8" y="393.7" font-family="Liberation Sans" font-size="13" text-anchor="middle" fill="#fff" >30</text>
<text x="173.9" y="393.7" font-family="Liberation Sans" font-size="13" text-anchor="middle" fill="#fff" >40</text>
<text x="185.0" y="394.7" font-family="Liberation Sans" font-size="9" text-anchor="start" fill="#fff" >m/s</text>
<text x="46.4" y="287.3" font-family="Liberation Sans" font-size="12" text-anchor="start" fill="#a040c0" >Multicells</text>
<text x="133.3" y="316.2" font-family="Liberation Sans" font-size="12" text-anchor="start" fill="#e03030" >Supercells</text>
<text x="43.3" y="346.6" font-family="Liberation Sans" font-size="12" text-anchor="start" fill="#2828d8" >Ordinary Cells</text>
<rect x="29.5" y="419" width="174.7" height="142.5" fill="none" stroke="#fff" stroke-width="2"/>
<polyline points="29.5,489.7 134.7,489.7 134.7,451.9 147.7,437.3" stroke="#c8c8c8" stroke-width="1" fill="none"/>
<polyline points="29.5,513.7 145.5,513.7 145.5,457.4 164.2,437.3" stroke="#c8c8c8" stroke-width="1" fill="none"/>
<polyline points="145.5,513.7 193.2,550.4" stroke="#c8c8c8" stroke-width="1" fill="none"/>
<circle cx="204.2" cy="549" r="5.5" fill="#fff"/>
<text x="118.0" y="433.7" font-family="Liberation Sans" font-size="13" text-anchor="middle" fill="#fff" >Dry Microburst Potential</text>
<text x="52.0" y="472.9" font-family="Liberation Sans" font-size="11" text-anchor="start" fill="#a030c0" >Gusts &gt; 40 kts</text>
<text x="52.0" y="507.9" font-family="Liberation Sans" font-size="11" text-anchor="start" fill="#a030c0" >Gusts &gt; 30 kts</text>
<text x="52.0" y="534.9" font-family="Liberation Sans" font-size="11" text-anchor="start" fill="#a030c0" >Too moist for strong</text>
<text x="52.0" y="546.9" font-family="Liberation Sans" font-size="11" text-anchor="start" fill="#a030c0" >convective gusts</text>
<text x="150.0" y="476.9" font-family="Liberation Sans" font-size="11" text-anchor="start" fill="#a030c0" >Too stable</text>
<text x="150.0" y="488.9" font-family="Liberation Sans" font-size="11" text-anchor="start" fill="#a030c0" >for upper</text>
<text x="150.0" y="500.9" font-family="Liberation Sans" font-size="11" text-anchor="start" fill="#a030c0" >level</text>
<text x="150.0" y="512.9" font-family="Liberation Sans" font-size="11" text-anchor="start" fill="#a030c0" >TSTMs</text>
<text x="27.0" y="422.3" font-family="Liberation Sans" font-size="12" text-anchor="end" fill="#fff" >30</text>
<text x="27.0" y="470.3" font-family="Liberation Sans" font-size="12" text-anchor="end" fill="#fff" >20</text>
<text x="27.0" y="517.3" font-family="Liberation Sans" font-size="12" text-anchor="end" fill="#fff" >10</text>
<text x="5.0" y="533.9" font-family="Liberation Sans" font-size="11" text-anchor="start" fill="#fff" >700</text>
<text x="5.0" y="545.9" font-family="Liberation Sans" font-size="11" text-anchor="start" fill="#fff" >T/Td</text>
<text x="5.0" y="557.9" font-family="Liberation Sans" font-size="11" text-anchor="start" fill="#fff" >Dep</text>
<text x="5.0" y="568.9" font-family="Liberation Sans" font-size="11" text-anchor="start" fill="#fff" >°C</text>
<text x="36.5" y="560.8" font-family="Liberation Sans" font-size="12" text-anchor="middle" fill="#fff" >-5</text>
<text x="88.5" y="560.8" font-family="Liberation Sans" font-size="12" text-anchor="middle" fill="#fff" >0</text>
<text x="147.5" y="560.8" font-family="Liberation Sans" font-size="12" text-anchor="middle" fill="#fff" >5</text>
<text x="194.0" y="560.8" font-family="Liberation Sans" font-size="12" text-anchor="middle" fill="#fff" >10</text>
<text x="114.0" y="576.9" font-family="Liberation Sans" font-size="11" text-anchor="middle" fill="#fff" >Upper Level Instability Index</text>
<rect x="11" y="591" width="181.5" height="78" fill="none" stroke="#fff" stroke-width="2"/>
<text x="98.0" y="606.1" font-family="Liberation Sans" font-size="12" text-anchor="middle" fill="#fff" >Storm Category</text>
<rect x="21.8" y="642" width="41" height="7" fill="#0010ff"/>
<rect x="78" y="645" width="41" height="4" fill="#a020b0"/>
<rect x="134" y="612.8" width="40" height="36.2" fill="#ff0000"/>
<text x="44.0" y="665.1" font-family="Liberation Sans" font-size="12" text-anchor="middle" fill="#1818c8" >Weak</text>
<text x="98.5" y="665.1" font-family="Liberation Sans" font-size="12" text-anchor="middle" fill="#a020b0" >Mod</text>
<text x="153.5" y="665.1" font-family="Liberation Sans" font-size="12" text-anchor="middle" fill="#e02020" >Strong</text>
</svg>
<svg width="1024" height="688" viewBox="0 0 1024 688" style="position:absolute;left:0;top:0">
<text transform="translate(636.9,31.30) scale(1,0.850)" x="0" y="0" font-family="Liberation Mono" font-size="13.2" text-anchor="start" fill="#fff" xml:space="preserve"> TROP Lvl:    -- m AGL</text>
<text transform="translate(636.9,42.70) scale(1,0.850)" x="0" y="0" font-family="Liberation Mono" font-size="13.2" text-anchor="start" fill="#fff" xml:space="preserve"> FRZG Lvl:  4392 m AGL</text>
<text transform="translate(636.9,54.10) scale(1,0.850)" x="0" y="0" font-family="Liberation Mono" font-size="13.2" text-anchor="start" fill="#fff" xml:space="preserve">cclEL Hgt: 15124 m AGL</text>
<text transform="translate(636.9,65.50) scale(1,0.850)" x="0" y="0" font-family="Liberation Mono" font-size="13.2" text-anchor="start" fill="#fff" xml:space="preserve">lfcEL Hgt:    -- m AGL</text>
<text transform="translate(636.9,76.90) scale(1,0.850)" x="0" y="0" font-family="Liberation Mono" font-size="13.2" text-anchor="start" fill="#fff" xml:space="preserve">  LFC Hgt:   621 m AGL</text>
<text transform="translate(636.9,88.30) scale(1,0.850)" x="0" y="0" font-family="Liberation Mono" font-size="13.2" text-anchor="start" fill="#fff" xml:space="preserve">  CCL Hgt:   757 m AGL</text>
<text transform="translate(636.9,99.70) scale(1,0.850)" x="0" y="0" font-family="Liberation Mono" font-size="13.2" text-anchor="start" fill="#fff" xml:space="preserve">  LCL Hgt:   621 m AGL</text>
<text transform="translate(636.9,111.10) scale(1,0.850)" x="0" y="0" font-family="Liberation Mono" font-size="13.2" text-anchor="start" fill="#fff" xml:space="preserve">    Water:  6.28 cm</text>
<text transform="translate(636.9,122.50) scale(1,0.850)" x="0" y="0" font-family="Liberation Mono" font-size="13.2" text-anchor="start" fill="#fff" xml:space="preserve">     Hail:  0.64 cm</text>
<text transform="translate(636.9,133.90) scale(1,0.850)" x="0" y="0" font-family="Liberation Mono" font-size="13.2" text-anchor="start" fill="#fff" xml:space="preserve">   T2Gust:    44 kt</text>
<text transform="translate(636.9,145.30) scale(1,0.850)" x="0" y="0" font-family="Liberation Mono" font-size="13.2" text-anchor="start" fill="#fff" xml:space="preserve">   WindEx:    58 kt</text>
<text transform="translate(636.9,156.70) scale(1,0.850)" x="0" y="0" font-family="Liberation Mono" font-size="13.2" text-anchor="start" fill="#fff" xml:space="preserve">    SWEAT: 630.0</text>
<text transform="translate(636.9,168.10) scale(1,0.850)" x="0" y="0" font-family="Liberation Mono" font-size="13.2" text-anchor="start" fill="#fff" xml:space="preserve">      CAP:   0.2</text>
<text transform="translate(636.9,179.50) scale(1,0.850)" x="0" y="0" font-family="Liberation Mono" font-size="13.2" text-anchor="start" fill="#fff" xml:space="preserve">       LI: -12.6</text>
<text transform="translate(636.9,190.90) scale(1,0.850)" x="0" y="0" font-family="Liberation Mono" font-size="13.2" text-anchor="start" fill="#fff" xml:space="preserve">       TT:  56.4</text>
<text transform="translate(636.9,202.30) scale(1,0.850)" x="0" y="0" font-family="Liberation Mono" font-size="13.2" text-anchor="start" fill="#fff" xml:space="preserve">       KI:  46.6</text>
<text transform="translate(636.9,213.70) scale(1,0.850)" x="0" y="0" font-family="Liberation Mono" font-size="13.2" text-anchor="start" fill="#fff" xml:space="preserve">       Tc:  31.3 °C</text>
<text transform="translate(636.9,233.20) scale(1,0.850)" x="0" y="0" font-family="Liberation Mono" font-size="13.2" text-anchor="start" fill="#fff" xml:space="preserve">    Storm: 252/36 0-6km</text>
<text transform="translate(636.9,244.55) scale(1,0.850)" x="0" y="0" font-family="Liberation Mono" font-size="13.2" text-anchor="start" fill="#fff" xml:space="preserve">     s-rH:  384  0-3km</text>
<text transform="translate(636.9,255.90) scale(1,0.850)" x="0" y="0" font-family="Liberation Mono" font-size="13.2" text-anchor="start" fill="#fff" xml:space="preserve">     s-rH:  303  0-2km</text>
<text transform="translate(636.9,267.25) scale(1,0.850)" x="0" y="0" font-family="Liberation Mono" font-size="13.2" text-anchor="start" fill="#fff" xml:space="preserve">     s-rH:  155  0-1km</text>
<text transform="translate(655.8,286.70) scale(1,0.850)" x="0" y="0" font-family="Liberation Mono" font-size="13.2" text-anchor="start" fill="#fff" xml:space="preserve">CAPE+ only:  6027 J/kg</text>
<text transform="translate(655.8,298.13) scale(1,0.850)" x="0" y="0" font-family="Liberation Mono" font-size="13.2" text-anchor="start" fill="#fff" xml:space="preserve"> CIN total:     0 J/kg</text>
<text transform="translate(655.8,309.56) scale(1,0.850)" x="0" y="0" font-family="Liberation Mono" font-size="13.2" text-anchor="start" fill="#fff" xml:space="preserve"> DCAPE 6km:     0 J/kg</text>
<text transform="translate(655.8,320.99) scale(1,0.850)" x="0" y="0" font-family="Liberation Mono" font-size="13.2" text-anchor="start" fill="#fff" xml:space="preserve"> VGP 0-4km:   0.968</text>
<text transform="translate(655.8,332.42) scale(1,0.850)" x="0" y="0" font-family="Liberation Mono" font-size="13.2" text-anchor="start" fill="#fff" xml:space="preserve"> EHI 0-1km:   5.8</text>
<text transform="translate(655.8,343.85) scale(1,0.850)" x="0" y="0" font-family="Liberation Mono" font-size="13.2" text-anchor="start" fill="#fff" xml:space="preserve">       MVV:    -- m/s</text>
<text transform="translate(655.8,355.28) scale(1,0.850)" x="0" y="0" font-family="Liberation Mono" font-size="13.2" text-anchor="start" fill="#fff" xml:space="preserve">       BRN:    43</text>
<text transform="translate(652.8,374.80) scale(1,0.850)" x="0" y="0" font-family="Liberation Mono" font-size="13.2" text-anchor="start" fill="#a0a0a0" xml:space="preserve">LFC Lift / LPL 961 mb</text>
<path d="M649.1,267 V361.3 H827" stroke="#d0d0d0" stroke-width="1" fill="none"/>
<path d="M841.6,17.5 V645 M848.4,17.5 V645 M854.6,17.5 V645" stroke="#a8a8a8" stroke-width="1"/>
<path d="M860.7,17.5 V645" stroke="#ffffff" stroke-width="1"/>
<rect x="855.0" y="53.8" width="5.0" height="94.4" fill="#0000ff"/>
<rect x="855.0" y="179.3" width="5.0" height="28.5" fill="#0000ff"/>
<rect x="855.0" y="293.9" width="5.0" height="163.3" fill="#0000ff"/>
<rect x="843.0" y="147.8" width="4.0" height="33.4" fill="#f4a070"/>
<rect x="843.0" y="207.0" width="4.0" height="67.2" fill="#f4a070"/>
<rect x="843.0" y="595.9" width="4.0" height="11.0" fill="#f4a070"/>
<rect x="843.0" y="608.9" width="4.0" height="4.1" fill="#f4a070"/>
<rect x="843.0" y="613.9" width="4.0" height="2.2" fill="#f4a070"/>
<rect x="848.5" y="273.4" width="4.9" height="22.4" fill="#20e020"/>
<rect x="848.5" y="456.3" width="4.9" height="140.5" fill="#20e020"/>
<rect x="848.5" y="606.0" width="4.9" height="4.0" fill="#20e020"/>
<rect x="848.5" y="611.9" width="4.9" height="9.8" fill="#20e020"/>
</svg>
<svg width="1024" height="688" viewBox="0 0 1024 688" style="position:absolute;left:0;top:0" shape-rendering="crispEdges">
<rect x="861" y="17.5" width="161" height="627.5" fill="none" stroke="#fff" stroke-width="1"/>
<path d="M908.5,17.5 V645" stroke="#fff" stroke-width="1" shape-rendering="crispEdges"/>
<path d="M897,633.5 H908 M903,630.5 H908 M903,627.5 H908 M903,624.5 H908 M903,621.5 H908 M903,618.5 H908 M903,615.5 H908 M903,612.5 H908 M903,610.5 H908 M903,607.5 H908 M897,604.5 H908 M903,601.5 H908 M903,597.5 H908 M903,594.5 H908 M903,591.5 H908 M903,588.5 H908 M903,585.5 H908 M903,582.5 H908 M903,579.5 H908 M903,576.5 H908 M897,573.5 H908 M903,570.5 H908 M903,567.5 H908 M903,563.5 H908 M903,560.5 H908 M903,557.5 H908 M903,554.5 H908 M903,551.5 H908 M903,547.5 H908 M903,544.5 H908 M897,541.5 H908 M903,538.5 H908 M903,535.5 H908 M903,532.5 H908 M903,528.5 H908 M903,525.5 H908 M903,522.5 H908 M903,519.5 H908 M903,516.5 H908 M903,512.5 H908 M897,509.5 H908 M903,506.5 H908 M903,503.5 H908 M903,499.5 H908 M903,496.5 H908 M903,493.5 H908 M903,490.5 H908 M903,486.5 H908 M903,483.5 H908 M903,480.5 H908 M897,477.5 H908 M903,473.5 H908 M903,470.5 H908 M903,466.5 H908 M903,463.5 H908 M903,459.5 H908 M903,456.5 H908 M903,452.5 H908 M903,449.5 H908 M903,446.5 H908 M897,442.5 H908 M903,439.5 H908 M903,435.5 H908 M903,432.5 H908 M903,428.5 H908 M903,425.5 H908 M903,421.5 H908 M903,418.5 H908 M903,414.5 H908 M903,411.5 H908 M897,407.5 H908 M903,404.5 H908 M903,400.5 H908 M903,397.5 H908 M903,393.5 H908 M903,390.5 H908 M903,386.5 H908 M903,383.5 H908 M903,379.5 H908 M903,376.5 H908 M897,372.5 H908 M903,368.5 H908 M903,365.5 H908 M903,361.5 H908 M903,358.5 H908 M903,354.5 H908 M903,350.5 H908 M903,347.5 H908 M903,343.5 H908 M903,340.5 H908 M897,336.5 H908 M903,332.5 H908 M903,328.5 H908 M903,325.5 H908 M903,321.5 H908 M903,317.5 H908 M903,314.5 H908 M903,310.5 H908 M903,306.5 H908 M903,302.5 H908 M897,299.5 H908 M903,295.5 H908 M903,291.5 H908 M903,288.5 H908 M903,284.5 H908 M903,280.5 H908 M903,277.5 H908 M903,273.5 H908 M903,269.5 H908 M903,265.5 H908 M897,262.5 H908 M903,258.5 H908 M903,254.5 H908 M903,250.5 H908 M903,246.5 H908 M903,241.5 H908 M903,237.5 H908 M903,233.5 H908 M903,229.5 H908 M903,225.5 H908 M897,221.5 H908 M903,217.5 H908 M903,213.5 H908 M903,209.5 H908 M903,205.5 H908 M903,201.5 H908 M903,197.5 H908 M903,193.5 H908 M903,189.5 H908 M903,184.5 H908 M897,180.5 H908 M903,176.5 H908 M903,172.5 H908 M903,168.5 H908 M903,164.5 H908 M903,159.5 H908 M903,155.5 H908 M903,151.5 H908 M903,147.5 H908 M903,143.5 H908 M897,139.5 H908 M903,134.5 H908 M903,130.5 H908 M903,125.5 H908 M903,121.5 H908 M903,117.5 H908 M903,112.5 H908 M903,108.5 H908 M903,104.5 H908 M903,99.5 H908 M897,95.5 H908 M903,90.5 H908 M903,86.5 H908 M903,82.5 H908 M903,77.5 H908 M903,73.5 H908 M903,68.5 H908 M903,64.5 H908 M903,59.5 H908 M903,55.5 H908 M897,50.5 H908 M903,46.5 H908 M908,633.5 H919 M908,624.5 H914 M908,615.5 H914 M908,606.5 H914 M908,597.5 H914 M908,588.5 H919 M908,578.5 H914 M908,569.5 H914 M908,559.5 H914 M908,549.5 H914 M908,540.5 H919 M908,530.5 H914 M908,520.5 H914 M908,510.5 H914 M908,500.5 H914 M908,490.5 H919 M908,481.5 H914 M908,470.5 H914 M908,460.5 H914 M908,449.5 H914 M908,439.5 H919 M908,428.5 H914 M908,418.5 H914 M908,407.5 H914 M908,396.5 H914 M908,385.5 H919 M908,375.5 H914 M908,364.5 H914 M908,353.5 H914 M908,342.5 H914 M908,331.5 H919 M908,319.5 H914 M908,308.5 H914 M908,297.5 H914 M908,285.5 H914 M908,274.5 H919 M908,263.5 H914 M908,251.5 H914 M908,238.5 H914 M908,226.5 H914 M908,213.5 H919 M908,201.5 H914 M908,188.5 H914 M908,176.5 H914 M908,163.5 H914 M908,150.5 H919 M908,138.5 H914 M908,124.5 H914 M908,111.5 H914 M908,98.5 H914 M908,84.5 H919 M908,71.5 H914 M908,57.5 H914 M908,44.5 H914" stroke="#fff" stroke-width="1" fill="none" shape-rendering="crispEdges"/>
<text x="895.0" y="637.9" font-family="Liberation Sans" font-size="12" text-anchor="end" fill="#fff" >0</text>
<text x="895.0" y="608.4" font-family="Liberation Sans" font-size="12" text-anchor="end" fill="#fff" >1</text>
<text x="895.0" y="577.7" font-family="Liberation Sans" font-size="12" text-anchor="end" fill="#fff" >2</text>
<text x="895.0" y="545.9" font-family="Liberation Sans" font-size="12" text-anchor="end" fill="#fff" >3</text>
<text x="895.0" y="513.9" font-family="Liberation Sans" font-size="12" text-anchor="end" fill="#fff" >4</text>
<text x="895.0" y="481.3" font-family="Liberation Sans" font-size="12" text-anchor="end" fill="#fff" >5</text>
<text x="895.0" y="447.0" font-family="Liberation Sans" font-size="12" text-anchor="end" fill="#fff" >6</text>
<text x="895.0" y="412.1" font-family="Liberation Sans" font-size="12" text-anchor="end" fill="#fff" >7</text>
<text x="895.0" y="376.8" font-family="Liberation Sans" font-size="12" text-anchor="end" fill="#fff" >8</text>
<text x="895.0" y="340.7" font-family="Liberation Sans" font-size="12" text-anchor="end" fill="#fff" >9</text>
<text x="895.0" y="303.5" font-family="Liberation Sans" font-size="12" text-anchor="end" fill="#fff" >10</text>
<text x="895.0" y="266.6" font-family="Liberation Sans" font-size="12" text-anchor="end" fill="#fff" >11</text>
<text x="895.0" y="225.9" font-family="Liberation Sans" font-size="12" text-anchor="end" fill="#fff" >12</text>
<text x="895.0" y="185.2" font-family="Liberation Sans" font-size="12" text-anchor="end" fill="#fff" >13</text>
<text x="895.0" y="143.3" font-family="Liberation Sans" font-size="12" text-anchor="end" fill="#fff" >14</text>
<text x="895.0" y="99.7" font-family="Liberation Sans" font-size="12" text-anchor="end" fill="#fff" >15</text>
<text x="895.0" y="55.2" font-family="Liberation Sans" font-size="12" text-anchor="end" fill="#fff" >16</text>
<text x="921.5" y="637.9" font-family="Liberation Sans" font-size="12" text-anchor="start" fill="#fff" >0</text>
<text x="921.5" y="592.3" font-family="Liberation Sans" font-size="12" text-anchor="start" fill="#fff" >5</text>
<text x="921.5" y="544.4" font-family="Liberation Sans" font-size="12" text-anchor="start" fill="#fff" >10</text>
<text x="921.5" y="495.2" font-family="Liberation Sans" font-size="12" text-anchor="start" fill="#fff" >15</text>
<text x="921.5" y="443.6" font-family="Liberation Sans" font-size="12" text-anchor="start" fill="#fff" >20</text>
<text x="921.5" y="390.2" font-family="Liberation Sans" font-size="12" text-anchor="start" fill="#fff" >25</text>
<text x="921.5" y="335.3" font-family="Liberation Sans" font-size="12" text-anchor="start" fill="#fff" >30</text>
<text x="921.5" y="278.8" font-family="Liberation Sans" font-size="12" text-anchor="start" fill="#fff" >35</text>
<text x="921.5" y="218.1" font-family="Liberation Sans" font-size="12" text-anchor="start" fill="#fff" >40</text>
<text x="921.5" y="155.2" font-family="Liberation Sans" font-size="12" text-anchor="start" fill="#fff" >45</text>
<text x="921.5" y="89.0" font-family="Liberation Sans" font-size="12" text-anchor="start" fill="#fff" >50</text>
<text x="881.8" y="12.0" font-family="Liberation Sans" font-size="11" text-anchor="start" fill="#fff" >KM</text>
<text x="916.7" y="12.0" font-family="Liberation Sans" font-size="11" text-anchor="start" fill="#fff" >FT (x1000)</text>
<text x="898.7" y="662.0" font-family="Liberation Sans" font-size="13" text-anchor="start" fill="#fff" >MSL</text>
<text x="974.0" y="662.0" font-family="Liberation Sans" font-size="13" text-anchor="start" fill="#fff" >KNOTS</text>
<line x1="974.5" y1="54.4" x2="940.0" y2="60.5" stroke="#fff" stroke-width="1"/>
<polygon points="975.0,54.3 970.2,53.3 970.9,56.9" fill="#fff"/>
<line x1="940.0" y1="60.5" x2="931.4" y2="46.3" stroke="#fff" stroke-width="1"/>
<line x1="944.2" y1="59.8" x2="935.6" y2="45.5" stroke="#fff" stroke-width="1"/>
<line x1="948.5" y1="59.0" x2="939.9" y2="44.8" stroke="#fff" stroke-width="1"/>
<line x1="952.7" y1="58.3" x2="948.4" y2="50.9" stroke="#fff" stroke-width="1"/>
<line x1="974.5" y1="106.7" x2="938.5" y2="101.2" stroke="#fff" stroke-width="1"/>
<polygon points="975.0,106.8 970.8,104.3 970.3,107.9" fill="#fff"/>
<line x1="938.5" y1="101.2" x2="934.9" y2="85.0" stroke="#fff" stroke-width="1"/>
<line x1="942.8" y1="101.8" x2="939.2" y2="85.6" stroke="#fff" stroke-width="1"/>
<line x1="947.0" y1="102.5" x2="943.4" y2="86.3" stroke="#fff" stroke-width="1"/>
<line x1="951.3" y1="103.1" x2="949.5" y2="94.8" stroke="#fff" stroke-width="1"/>
<line x1="974.5" y1="148.3" x2="942.9" y2="134.3" stroke="#fff" stroke-width="1"/>
<polygon points="975.0,148.5 971.6,145.0 970.1,148.3" fill="#fff"/>
<line x1="942.9" y1="134.3" x2="943.7" y2="117.7" stroke="#fff" stroke-width="1"/>
<line x1="946.8" y1="136.0" x2="947.6" y2="119.4" stroke="#fff" stroke-width="1"/>
<line x1="950.8" y1="137.8" x2="951.6" y2="121.2" stroke="#fff" stroke-width="1"/>
<line x1="954.7" y1="139.5" x2="955.2" y2="131.0" stroke="#fff" stroke-width="1"/>
<line x1="974.5" y1="180.9" x2="941.4" y2="168.0" stroke="#fff" stroke-width="1"/>
<polygon points="975.0,181.1 971.4,177.8 970.1,181.1" fill="#fff"/>
<line x1="941.4" y1="168.0" x2="941.4" y2="151.4" stroke="#fff" stroke-width="1"/>
<line x1="945.4" y1="169.6" x2="945.4" y2="152.9" stroke="#fff" stroke-width="1"/>
<line x1="949.4" y1="171.1" x2="949.5" y2="154.5" stroke="#fff" stroke-width="1"/>
<line x1="953.4" y1="172.7" x2="953.5" y2="164.1" stroke="#fff" stroke-width="1"/>
<line x1="974.5" y1="207.3" x2="935.8" y2="198.0" stroke="#fff" stroke-width="1"/>
<polygon points="975.0,207.4 971.0,204.6 970.2,208.1" fill="#fff"/>
<polygon points="935.8,198.0 939.1,182.3 942.6,199.6" fill="#fff"/>
<line x1="974.5" y1="230.4" x2="935.8" y2="220.4" stroke="#fff" stroke-width="1"/>
<polygon points="975.0,230.5 971.1,227.7 970.2,231.1" fill="#fff"/>
<polygon points="935.8,220.4 939.3,204.8 942.6,222.2" fill="#fff"/>
<line x1="974.5" y1="251.5" x2="934.5" y2="244.3" stroke="#fff" stroke-width="1"/>
<polygon points="975.0,251.6 970.9,249.0 970.2,252.6" fill="#fff"/>
<polygon points="934.5,244.3 936.8,228.5 941.4,245.5" fill="#fff"/>
<line x1="974.5" y1="273.4" x2="933.4" y2="271.8" stroke="#fff" stroke-width="1"/>
<polygon points="975.0,273.4 970.6,271.4 970.4,275.0" fill="#fff"/>
<polygon points="933.4,271.8 933.5,255.8 940.4,272.1" fill="#fff"/>
<line x1="974.5" y1="294.4" x2="935.3" y2="301.0" stroke="#fff" stroke-width="1"/>
<polygon points="975.0,294.3 970.3,293.3 970.9,296.8" fill="#fff"/>
<polygon points="935.3,301.0 932.2,285.3 942.2,299.8" fill="#fff"/>
<line x1="945.2" y1="299.3" x2="940.9" y2="291.9" stroke="#fff" stroke-width="1"/>
<line x1="974.5" y1="315.5" x2="936.8" y2="327.8" stroke="#fff" stroke-width="1"/>
<polygon points="975.0,315.3 970.1,315.0 971.3,318.5" fill="#fff"/>
<polygon points="936.8,327.8 931.4,312.7 943.5,325.6" fill="#fff"/>
<line x1="946.3" y1="324.7" x2="941.0" y2="318.0" stroke="#fff" stroke-width="1"/>
<line x1="974.5" y1="335.1" x2="938.2" y2="351.8" stroke="#fff" stroke-width="1"/>
<polygon points="975.0,334.9 970.1,335.1 971.6,338.4" fill="#fff"/>
<polygon points="938.2,351.8 931.1,337.5 944.6,348.9" fill="#fff"/>
<line x1="947.3" y1="347.6" x2="941.2" y2="341.6" stroke="#fff" stroke-width="1"/>
<line x1="974.5" y1="354.7" x2="939.7" y2="372.9" stroke="#fff" stroke-width="1"/>
<polygon points="974.9,354.5 970.1,355.0 971.8,358.1" fill="#fff"/>
<polygon points="939.7,372.9 931.8,359.0 945.9,369.7" fill="#fff"/>
<line x1="948.6" y1="368.3" x2="936.1" y2="357.3" stroke="#fff" stroke-width="1"/>
<line x1="974.5" y1="372.2" x2="940.5" y2="390.7" stroke="#fff" stroke-width="1"/>
<polygon points="974.9,372.0 970.1,372.5 971.8,375.7" fill="#fff"/>
<polygon points="940.5,390.7 932.4,376.9 946.6,387.4" fill="#fff"/>
<line x1="949.3" y1="385.9" x2="942.8" y2="380.3" stroke="#fff" stroke-width="1"/>
<line x1="974.5" y1="389.0" x2="940.5" y2="407.5" stroke="#fff" stroke-width="1"/>
<polygon points="974.9,388.8 970.1,389.3 971.8,392.5" fill="#fff"/>
<polygon points="940.5,407.5 932.4,393.7 946.6,404.2" fill="#fff"/>
<line x1="949.3" y1="402.7" x2="942.8" y2="397.1" stroke="#fff" stroke-width="1"/>
<line x1="974.5" y1="404.8" x2="940.5" y2="423.3" stroke="#fff" stroke-width="1"/>
<polygon points="974.9,404.6 970.1,405.1 971.8,408.3" fill="#fff"/>
<polygon points="940.5,423.3 932.4,409.5 946.6,420.0" fill="#fff"/>
<line x1="949.3" y1="418.5" x2="942.8" y2="412.9" stroke="#fff" stroke-width="1"/>
<line x1="974.5" y1="418.1" x2="940.5" y2="436.6" stroke="#fff" stroke-width="1"/>
<polygon points="974.9,417.9 970.1,418.4 971.8,421.6" fill="#fff"/>
<polygon points="940.5,436.6 932.4,422.8 946.6,433.3" fill="#fff"/>
<line x1="949.3" y1="431.8" x2="942.8" y2="426.2" stroke="#fff" stroke-width="1"/>
<line x1="974.5" y1="431.7" x2="940.5" y2="450.2" stroke="#fff" stroke-width="1"/>
<polygon points="974.9,431.5 970.1,432.0 971.8,435.2" fill="#fff"/>
<polygon points="940.5,450.2 932.4,436.4 946.6,446.9" fill="#fff"/>
<line x1="949.3" y1="445.4" x2="942.8" y2="439.8" stroke="#fff" stroke-width="1"/>
<line x1="974.5" y1="444.4" x2="940.5" y2="462.9" stroke="#fff" stroke-width="1"/>
<polygon points="974.9,444.2 970.1,444.7 971.8,447.9" fill="#fff"/>
<polygon points="940.5,462.9 932.4,449.1 946.6,459.6" fill="#fff"/>
<line x1="949.3" y1="458.1" x2="942.8" y2="452.5" stroke="#fff" stroke-width="1"/>
<line x1="974.5" y1="456.1" x2="940.5" y2="474.6" stroke="#fff" stroke-width="1"/>
<polygon points="974.9,455.9 970.1,456.4 971.8,459.6" fill="#fff"/>
<polygon points="940.5,474.6 932.4,460.8 946.6,471.3" fill="#fff"/>
<line x1="949.3" y1="469.8" x2="942.8" y2="464.2" stroke="#fff" stroke-width="1"/>
<line x1="974.5" y1="467.7" x2="940.5" y2="486.2" stroke="#fff" stroke-width="1"/>
<polygon points="974.9,467.5 970.1,468.0 971.8,471.2" fill="#fff"/>
<polygon points="940.5,486.2 932.4,472.4 946.6,482.9" fill="#fff"/>
<line x1="949.3" y1="481.4" x2="942.8" y2="475.8" stroke="#fff" stroke-width="1"/>
<line x1="974.5" y1="477.9" x2="940.5" y2="496.4" stroke="#fff" stroke-width="1"/>
<polygon points="974.9,477.7 970.1,478.2 971.8,481.4" fill="#fff"/>
<polygon points="940.5,496.4 932.4,482.6 946.6,493.1" fill="#fff"/>
<line x1="949.3" y1="491.6" x2="942.8" y2="486.0" stroke="#fff" stroke-width="1"/>
<line x1="974.5" y1="488.5" x2="940.5" y2="507.0" stroke="#fff" stroke-width="1"/>
<polygon points="974.9,488.3 970.1,488.8 971.8,492.0" fill="#fff"/>
<polygon points="940.5,507.0 932.4,493.2 946.6,503.7" fill="#fff"/>
<line x1="949.3" y1="502.2" x2="942.8" y2="496.6" stroke="#fff" stroke-width="1"/>
<line x1="974.5" y1="497.2" x2="940.5" y2="515.7" stroke="#fff" stroke-width="1"/>
<polygon points="974.9,497.0 970.1,497.5 971.8,500.7" fill="#fff"/>
<polygon points="940.5,515.7 932.4,501.9 946.6,512.4" fill="#fff"/>
<line x1="949.3" y1="510.9" x2="942.8" y2="505.3" stroke="#fff" stroke-width="1"/>
<line x1="974.5" y1="506.5" x2="939.2" y2="517.4" stroke="#e01010" stroke-width="1"/>
<polygon points="975.0,506.4 970.1,506.0 971.2,509.4" fill="#e01010"/>
<polygon points="939.2,517.4 934.0,502.3 945.9,515.3" fill="#e01010"/>
<line x1="948.8" y1="514.4" x2="943.5" y2="507.7" stroke="#e01010" stroke-width="1"/>
<line x1="974.5" y1="515.7" x2="940.5" y2="532.7" stroke="#fff" stroke-width="1"/>
<polygon points="974.9,515.5 970.1,515.9 971.7,519.1" fill="#fff"/>
<polygon points="940.5,532.7 932.9,518.6 946.8,529.6" fill="#fff"/>
<line x1="949.4" y1="528.2" x2="943.2" y2="522.4" stroke="#fff" stroke-width="1"/>
<line x1="974.5" y1="523.4" x2="940.5" y2="540.4" stroke="#fff" stroke-width="1"/>
<polygon points="974.9,523.2 970.1,523.6 971.7,526.8" fill="#fff"/>
<polygon points="940.5,540.4 932.9,526.3 946.8,537.3" fill="#fff"/>
<line x1="949.4" y1="535.9" x2="943.2" y2="530.1" stroke="#fff" stroke-width="1"/>
<line x1="974.5" y1="530.5" x2="940.5" y2="547.5" stroke="#fff" stroke-width="1"/>
<polygon points="974.9,530.3 970.1,530.7 971.7,533.9" fill="#fff"/>
<polygon points="940.5,547.5 932.9,533.4 946.8,544.4" fill="#fff"/>
<line x1="949.4" y1="543.0" x2="943.2" y2="537.2" stroke="#fff" stroke-width="1"/>
<line x1="974.5" y1="537.9" x2="940.0" y2="556.9" stroke="#fff" stroke-width="1"/>
<polygon points="974.9,537.7 970.1,538.3 971.9,541.4" fill="#fff"/>
<line x1="940.0" y1="556.9" x2="927.3" y2="546.2" stroke="#fff" stroke-width="1"/>
<line x1="943.9" y1="554.7" x2="931.2" y2="544.0" stroke="#fff" stroke-width="1"/>
<line x1="947.9" y1="552.6" x2="935.2" y2="541.9" stroke="#fff" stroke-width="1"/>
<line x1="951.8" y1="550.4" x2="945.3" y2="544.8" stroke="#fff" stroke-width="1"/>
<line x1="974.5" y1="544.5" x2="940.6" y2="562.2" stroke="#fff" stroke-width="1"/>
<polygon points="974.9,544.3 970.1,544.8 971.8,547.9" fill="#fff"/>
<line x1="940.6" y1="562.2" x2="928.1" y2="551.2" stroke="#fff" stroke-width="1"/>
<line x1="944.6" y1="560.1" x2="932.1" y2="549.2" stroke="#fff" stroke-width="1"/>
<line x1="948.6" y1="558.0" x2="936.1" y2="547.1" stroke="#fff" stroke-width="1"/>
<line x1="952.6" y1="556.0" x2="946.2" y2="550.2" stroke="#fff" stroke-width="1"/>
<line x1="974.5" y1="551.4" x2="941.2" y2="567.8" stroke="#fff" stroke-width="1"/>
<polygon points="974.9,551.2 970.1,551.6 971.7,554.8" fill="#fff"/>
<line x1="941.2" y1="567.8" x2="929.0" y2="556.5" stroke="#fff" stroke-width="1"/>
<line x1="945.2" y1="565.8" x2="933.0" y2="554.6" stroke="#fff" stroke-width="1"/>
<line x1="949.3" y1="563.8" x2="937.0" y2="552.6" stroke="#fff" stroke-width="1"/>
<line x1="953.3" y1="561.8" x2="947.1" y2="556.0" stroke="#fff" stroke-width="1"/>
<line x1="974.5" y1="557.5" x2="941.8" y2="572.6" stroke="#fff" stroke-width="1"/>
<polygon points="975.0,557.3 970.1,557.5 971.6,560.8" fill="#fff"/>
<line x1="941.8" y1="572.6" x2="929.9" y2="561.0" stroke="#fff" stroke-width="1"/>
<line x1="945.9" y1="570.7" x2="933.9" y2="559.2" stroke="#fff" stroke-width="1"/>
<line x1="950.0" y1="568.8" x2="938.0" y2="557.3" stroke="#fff" stroke-width="1"/>
<line x1="954.1" y1="566.9" x2="948.0" y2="560.9" stroke="#fff" stroke-width="1"/>
<line x1="974.5" y1="562.3" x2="942.4" y2="576.1" stroke="#fff" stroke-width="1"/>
<polygon points="975.0,562.1 970.1,562.2 971.5,565.5" fill="#fff"/>
<line x1="942.4" y1="576.1" x2="930.8" y2="564.2" stroke="#fff" stroke-width="1"/>
<line x1="946.5" y1="574.3" x2="934.9" y2="562.5" stroke="#fff" stroke-width="1"/>
<line x1="950.7" y1="572.5" x2="939.0" y2="560.7" stroke="#fff" stroke-width="1"/>
<line x1="954.8" y1="570.8" x2="948.9" y2="564.6" stroke="#fff" stroke-width="1"/>
<line x1="974.5" y1="568.1" x2="943.0" y2="580.6" stroke="#fff" stroke-width="1"/>
<polygon points="975.0,567.9 970.1,567.9 971.4,571.2" fill="#fff"/>
<line x1="943.0" y1="580.6" x2="931.7" y2="568.4" stroke="#fff" stroke-width="1"/>
<line x1="947.2" y1="578.9" x2="935.9" y2="566.7" stroke="#fff" stroke-width="1"/>
<line x1="951.4" y1="577.3" x2="940.1" y2="565.1" stroke="#fff" stroke-width="1"/>
<line x1="955.5" y1="575.6" x2="949.8" y2="569.3" stroke="#fff" stroke-width="1"/>
<line x1="974.5" y1="573.2" x2="943.6" y2="584.4" stroke="#fff" stroke-width="1"/>
<polygon points="975.0,573.0 970.1,572.9 971.4,576.3" fill="#fff"/>
<line x1="943.6" y1="584.4" x2="932.7" y2="571.9" stroke="#fff" stroke-width="1"/>
<line x1="947.8" y1="582.9" x2="936.9" y2="570.3" stroke="#fff" stroke-width="1"/>
<line x1="952.1" y1="581.3" x2="946.5" y2="574.8" stroke="#fff" stroke-width="1"/>
<line x1="974.5" y1="577.5" x2="944.2" y2="587.4" stroke="#fff" stroke-width="1"/>
<polygon points="975.0,577.3 970.1,577.0 971.3,580.5" fill="#fff"/>
<line x1="944.2" y1="587.4" x2="933.7" y2="574.5" stroke="#fff" stroke-width="1"/>
<line x1="948.5" y1="586.0" x2="938.0" y2="573.1" stroke="#fff" stroke-width="1"/>
<line x1="952.8" y1="584.6" x2="947.4" y2="577.9" stroke="#fff" stroke-width="1"/>
<line x1="974.5" y1="582.6" x2="944.8" y2="591.2" stroke="#fff" stroke-width="1"/>
<polygon points="975.0,582.5 970.2,582.0 971.2,585.4" fill="#fff"/>
<line x1="944.8" y1="591.2" x2="934.7" y2="578.0" stroke="#fff" stroke-width="1"/>
<line x1="949.1" y1="589.9" x2="939.0" y2="576.7" stroke="#fff" stroke-width="1"/>
<line x1="953.4" y1="588.7" x2="948.3" y2="581.8" stroke="#fff" stroke-width="1"/>
<line x1="974.5" y1="586.5" x2="945.4" y2="593.8" stroke="#fff" stroke-width="1"/>
<polygon points="975.0,586.4 970.2,585.7 971.1,589.2" fill="#fff"/>
<line x1="945.4" y1="593.8" x2="935.8" y2="580.2" stroke="#fff" stroke-width="1"/>
<line x1="949.8" y1="592.7" x2="940.2" y2="579.1" stroke="#fff" stroke-width="1"/>
<line x1="954.1" y1="591.6" x2="949.3" y2="584.6" stroke="#fff" stroke-width="1"/>
<line x1="974.5" y1="590.3" x2="946.0" y2="596.3" stroke="#fff" stroke-width="1"/>
<polygon points="975.0,590.2 970.2,589.4 971.0,592.9" fill="#fff"/>
<line x1="946.0" y1="596.3" x2="936.9" y2="582.4" stroke="#fff" stroke-width="1"/>
<line x1="950.4" y1="595.4" x2="941.3" y2="581.4" stroke="#fff" stroke-width="1"/>
<line x1="954.8" y1="594.4" x2="950.2" y2="587.2" stroke="#fff" stroke-width="1"/>
<line x1="938.0" y1="593.0" x2="974.5" y2="596.0" stroke="#fff" stroke-width="1.1"/>
<line x1="974.5" y1="587.0" x2="948.0" y2="594.0" stroke="#fff" stroke-width="1"/>
<line x1="938.6" y1="595.6" x2="974.5" y2="598.4" stroke="#fff" stroke-width="1.1"/>
<line x1="939.3" y1="598.2" x2="974.5" y2="600.8" stroke="#fff" stroke-width="1.1"/>
<line x1="974.5" y1="592.2" x2="949.3" y2="599.2" stroke="#fff" stroke-width="1"/>
<line x1="940.0" y1="600.8" x2="974.5" y2="603.2" stroke="#fff" stroke-width="1.1"/>
<line x1="940.6" y1="603.4" x2="974.5" y2="605.6" stroke="#fff" stroke-width="1.1"/>
<line x1="974.5" y1="597.4" x2="950.6" y2="604.4" stroke="#fff" stroke-width="1"/>
<line x1="941.2" y1="606.0" x2="974.5" y2="608.0" stroke="#fff" stroke-width="1.1"/>
<line x1="941.9" y1="608.6" x2="974.5" y2="610.4" stroke="#fff" stroke-width="1.1"/>
<line x1="974.5" y1="602.6" x2="951.9" y2="609.6" stroke="#fff" stroke-width="1"/>
<line x1="942.6" y1="611.2" x2="974.5" y2="612.8" stroke="#fff" stroke-width="1.1"/>
<line x1="943.2" y1="613.8" x2="974.5" y2="615.2" stroke="#fff" stroke-width="1.1"/>
<line x1="974.5" y1="607.8" x2="953.2" y2="614.8" stroke="#fff" stroke-width="1"/>
<line x1="943.9" y1="616.4" x2="974.5" y2="617.6" stroke="#fff" stroke-width="1.1"/>
<line x1="944.5" y1="619.0" x2="974.5" y2="620.0" stroke="#fff" stroke-width="1.1"/>
<line x1="974.5" y1="613.0" x2="954.5" y2="620.0" stroke="#fff" stroke-width="1"/>
<line x1="945.2" y1="621.6" x2="974.5" y2="622.4" stroke="#fff" stroke-width="1.1"/>
<line x1="945.8" y1="624.2" x2="974.5" y2="624.8" stroke="#fff" stroke-width="1.1"/>
<line x1="974.5" y1="618.2" x2="955.8" y2="625.2" stroke="#fff" stroke-width="1"/>
<line x1="946.5" y1="626.8" x2="974.5" y2="627.2" stroke="#fff" stroke-width="1.1"/>
<line x1="947.0" y1="629.0" x2="974.5" y2="629.2" stroke="#fff" stroke-width="1.1"/>
<line x1="947.6" y1="631.2" x2="974.5" y2="631.2" stroke="#fff" stroke-width="1.1"/>
<line x1="948.1" y1="633.4" x2="974.5" y2="633.2" stroke="#fff" stroke-width="1.1"/>
<line x1="948.7" y1="635.6" x2="974.5" y2="635.3" stroke="#fff" stroke-width="1.1"/>
<line x1="949.2" y1="637.8" x2="974.5" y2="637.3" stroke="#fff" stroke-width="1.1"/>
<line x1="949.8" y1="640.0" x2="974.5" y2="639.3" stroke="#fff" stroke-width="1.1"/>
<line x1="950.3" y1="642.2" x2="974.5" y2="641.4" stroke="#fff" stroke-width="1.1"/>
<line x1="950.9" y1="644.4" x2="974.5" y2="643.4" stroke="#fff" stroke-width="1.1"/>
<line x1="951.4" y1="646.6" x2="974.5" y2="645.4" stroke="#fff" stroke-width="1.1"/>
<line x1="952.0" y1="648.8" x2="974.5" y2="647.4" stroke="#fff" stroke-width="1.1"/>
<line x1="952.5" y1="651.0" x2="974.5" y2="649.5" stroke="#fff" stroke-width="1.1"/>
<line x1="953.1" y1="653.2" x2="974.5" y2="651.5" stroke="#fff" stroke-width="1.1"/>
<line x1="953.6" y1="655.4" x2="974.5" y2="653.5" stroke="#fff" stroke-width="1.1"/>
<polygon points="947,617 974,612 974.5,654 956,658.5 952,637" fill="#ececec"/>
<polygon points="931,512 941,521 943,540 935,541" fill="#fff"/>
</svg>
<div style="position:absolute;left:232px;top:2px;width:292px;height:424.4px;background:#fff;overflow:hidden;font-family:'Liberation Sans',sans-serif;font-size:11px;color:#000;">
<div style="position:absolute;right:0;top:0;width:2px;height:100%;background:linear-gradient(90deg,#d8d8d0,#8c8c86);"></div>
<div style="position:absolute;left:0;top:53.5px;width:288px;height:1px;background:#a8a8a8;"></div>
<div style="position:absolute;left:0;top:80.0px;width:288px;height:1px;background:#a8a8a8;"></div>
<div style="position:absolute;left:0;top:122.9px;width:288px;height:1px;background:#a8a8a8;"></div>
<div style="position:absolute;left:0;top:165.8px;width:288px;height:1px;background:#a8a8a8;"></div>
<div style="position:absolute;left:0;top:209.0px;width:288px;height:1px;background:#a8a8a8;"></div>
<div style="position:absolute;left:0;top:268.5px;width:288px;height:1px;background:#a8a8a8;"></div>
<div style="position:absolute;left:0;top:294.8px;width:288px;height:1px;background:#a8a8a8;"></div>
<div style="position:absolute;left:0;top:232.4px;width:289px;height:16.4px;background:#316ac5;"></div>
<div class="a" style="left:236.7px;top:1.9px;line-height:13px;color:#000;">Ctrl+N</div>
<div class="a" style="left:236.7px;top:18.9px;line-height:13px;color:#000;">Ctrl+O</div>
<div class="a" style="left:236.7px;top:87.7px;line-height:13px;color:#000;">Ctrl+D</div>
<div class="a" style="left:236.7px;top:104.7px;line-height:13px;color:#000;">Ctrl+B</div>
<div class="a" style="left:236.7px;top:130.3px;line-height:13px;color:#000;">F2</div>
<div class="a" style="left:236.7px;top:216.4px;line-height:13px;color:#000;">Ctrl+P</div>
<div class="a" style="left:236.7px;top:233.5px;line-height:13px;color:#fff;">Ctrl+I</div>
<div class="a" style="left:236.7px;top:250.7px;line-height:13px;color:#000;">Ctrl+C</div>
<div style="position:absolute;left:278.5px;top:63.4px;width:0;height:0;border-top:4px solid transparent;border-bottom:4px solid transparent;border-left:4px solid #000;"></div>
<div style="position:absolute;left:278.5px;top:175.1px;width:0;height:0;border-top:4px solid transparent;border-bottom:4px solid transparent;border-left:4px solid #000;"></div>
<div class="a" style="left:-8.5px;top:302.7px;line-height:13px;color:#000;"><span style="letter-spacing:-0.3px">Data\Michigan WRF-ARW Bufkit\NAM_KRST.BUF</span></div>
<div class="a" style="left:-8.5px;top:319.7px;line-height:13px;color:#000;"><span style="letter-spacing:-0.3px">Data\Michigan WRF-ARW Bufkit\NAM_KTOL.BUF</span></div>
<div class="a" style="left:-8.5px;top:336.7px;line-height:13px;color:#000;"><span style="letter-spacing:-0.3px">Data\Michigan WRF-ARW Bufkit\NAM_KFWA.BUF</span></div>
<div class="a" style="left:-8.5px;top:353.7px;line-height:13px;color:#000;"><span style="letter-spacing:-0.3px">Data\Michigan WRF-ARW Bufkit\NAM_KSBN.BUF</span></div>
<div class="a" style="left:-8.5px;top:370.7px;line-height:13px;color:#000;"><span style="letter-spacing:-0.3px">Data\Michigan WRF-ARW Bufkit\ARW_KJXN.BUF</span></div>
<div class="a" style="left:-8.5px;top:387.7px;line-height:13px;color:#000;"><span style="letter-spacing:-0.3px">Data\Michigan WRF-ARW Bufkit\RUC_KGRR.BUF</span></div>
<div class="a" style="left:-8.5px;top:404.7px;line-height:13px;color:#000;"><span style="letter-spacing:-0.3px">Data\Michigan WRF-ARW Bufkit\GFS3_KGRR.BUF</span></div>
<div class="a" style="left:-8.5px;top:421.7px;line-height:13px;color:#000;"><span style="letter-spacing:-0.3px">Data\Michigan WRF-ARW Bufkit\NAM_KGRR.BUF</span></div>
</div>
<div style="position:absolute;left:232px;top:426.4px;width:290px;height:2px;overflow:hidden;font-family:'Liberation Sans',sans-serif;font-size:11px;color:#a0a0a0;">
<div class="a" style="left:-8.5px;top:-2.7px;line-height:13px;letter-spacing:-0.3px">Data\Michigan WRF-ARW Bufkit\NAM_KGRR.BUF</div>
</div>
</body></html>
